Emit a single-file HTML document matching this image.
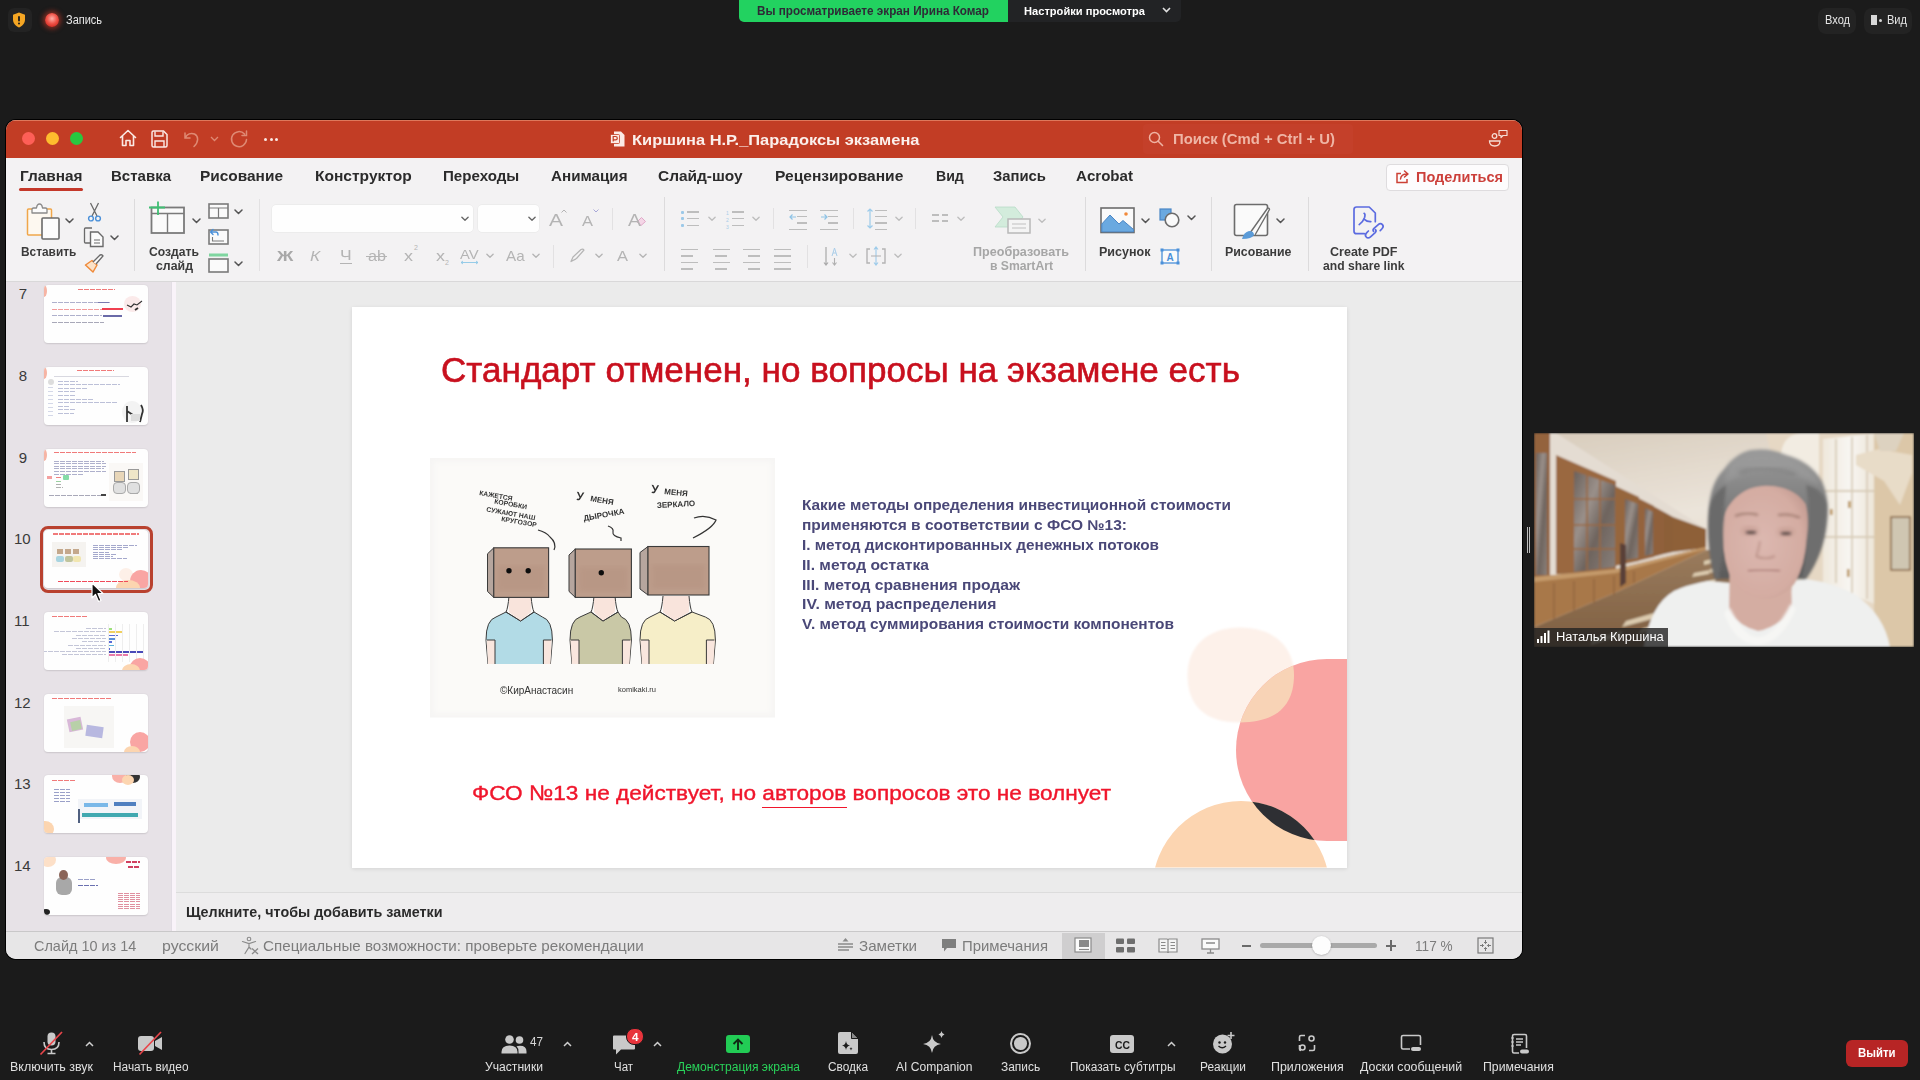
<!DOCTYPE html><html><head><meta charset="utf-8"><style>html,body{margin:0;padding:0;width:1920px;height:1080px;overflow:hidden;background:#1b1b1b;font-family:"Liberation Sans",sans-serif}span{white-space:pre;line-height:normal}</style></head><body><div style="position:relative;width:1920px;height:1080px;overflow:hidden"><div style="position:absolute;left:8px;top:8px;width:24px;height:24px;border-radius:6px;background:#232323"></div>
<svg style="position:absolute;left:12px;top:12px" width="14" height="16" viewBox="0 0 14 16"><path d="M7 0.5 L13 2.8 V7.5 C13 11.5 10 14.3 7 15.5 C4 14.3 1 11.5 1 7.5 V2.8 Z" fill="#f5a623"/><rect x="6.1" y="4" width="1.8" height="5.5" rx="0.9" fill="#1b1b1b"/><circle cx="7" cy="11.5" r="1" fill="#1b1b1b"/></svg>
<div style="position:absolute;left:45px;top:13px;width:14px;height:14px;border-radius:50%;background:radial-gradient(circle at 50% 40%,#ffb0a8 0%,#f0554a 45%,#d9362c 70%);box-shadow:0 0 5px 2px rgba(230,60,40,.55)"></div>
<div style="position:absolute;left:739px;top:0;width:442px;height:22px;border-radius:0 0 5px 5px;background:#222325"></div>
<div style="position:absolute;left:739px;top:0;width:269px;height:22px;border-radius:0 0 0 5px;background:#22d260"></div>
<svg style="position:absolute;left:1162px;top:7px" width="9" height="6" viewBox="0 0 9 6"><path d="M1 1 L4.5 4.5 L8 1" stroke="#e0e0e0" stroke-width="1.6" fill="none"/></svg>
<div style="position:absolute;left:1818px;top:8px;width:38px;height:26px;border-radius:8px;background:#232323"></div>
<div style="position:absolute;left:1864px;top:8px;width:48px;height:26px;border-radius:8px;background:#232323"></div>
<div style="position:absolute;left:1871px;top:15px;width:6px;height:10px;background:#d8d8d8"></div><div style="position:absolute;left:1879px;top:19px;width:3px;height:3px;border-radius:50%;background:#d8d8d8"></div>
<div style="position:absolute;left:6px;top:120px;width:1516px;height:839px;border-radius:10px;overflow:hidden;background:#ebebeb;box-shadow:0 0 0 1px #000"><div style="position:absolute;left:0;top:0;width:100%;height:38px;background:#c23d25;box-shadow:inset 0 1px 0 rgba(240,160,130,.6)"></div><div style="position:absolute;left:1137px;top:4px;width:210px;height:30px;background:#c4402a;border-radius:4px"></div><div style="position:absolute;left:0;top:38px;width:100%;height:123px;background:#f3f2f3;border-bottom:1px solid #d9d8d9"></div><div style="position:absolute;left:0;top:162px;width:166px;height:650px;background:#e7e2e7"></div><div style="position:absolute;left:166px;top:162px;width:4px;height:650px;background:#f9f3f9;box-shadow:-1px 0 0 #e2dde4"></div><div style="position:absolute;left:170px;top:772px;width:1346px;height:1px;background:#dcdcdc"></div><div style="position:absolute;left:170px;top:773px;width:1346px;height:39px;background:#eeedee"></div><div style="position:absolute;left:0;top:811px;width:100%;height:1px;background:#c9c8c9"></div><div style="position:absolute;left:0;top:812px;width:100%;height:27px;background:#e7e6e7"></div></div>
<div style="position:absolute;left:22.0px;top:132px;width:13px;height:13px;border-radius:50%;background:#fe5f57"></div>
<div style="position:absolute;left:46.0px;top:132px;width:13px;height:13px;border-radius:50%;background:#febc2e"></div>
<div style="position:absolute;left:69.5px;top:132px;width:13px;height:13px;border-radius:50%;background:#28c840"></div>
<svg style="position:absolute;left:118px;top:128px" width="20" height="20" viewBox="0 0 20 20"><path d="M2.5 9.5 L10 2.5 L17.5 9.5 M4.5 8 V17.5 H8 V12.5 H12 V17.5 H15.5 V8" stroke="#fbe9e4" stroke-width="1.6" fill="none" stroke-linejoin="round" stroke-linecap="round"/></svg>
<svg style="position:absolute;left:150px;top:130px" width="19" height="18" viewBox="0 0 19 18"><path d="M2 2.5 Q2 1 3.5 1 H13.5 L17 4.5 V15.5 Q17 17 15.5 17 H3.5 Q2 17 2 15.5 Z" stroke="#fbe9e4" stroke-width="1.5" fill="none"/><path d="M5 1.5 V6 H13 V1.5 M5 17 V11 H14 V17" stroke="#fbe9e4" stroke-width="1.4" fill="none"/></svg>
<svg style="position:absolute;left:182px;top:129px" width="20" height="20" viewBox="0 0 20 20"><path d="M3 4 V9 H8 M3.5 8.5 C5 5 9 3.5 12.5 5 C16.5 7 17 13 12 17.5" stroke="#df8a74" stroke-width="1.5" fill="none" stroke-linecap="round"/></svg>
<svg style="position:absolute;left:210px;top:136px" width="9" height="6" viewBox="0 0 9 6"><path d="M1 1 L4.5 4.5 L8 1" stroke="#df8a74" stroke-width="1.3" fill="none"/></svg>
<svg style="position:absolute;left:229px;top:129px" width="21" height="20" viewBox="0 0 21 20"><path d="M15.5 5 A7.5 7.5 0 1 0 17.5 10.5 M17.5 2 V6.5 H13" stroke="#df8a74" stroke-width="1.5" fill="none" stroke-linecap="round"/></svg>
<div style="position:absolute;left:264.0px;top:137.5px;width:3px;height:3px;border-radius:50%;background:#fbe9e4"></div>
<div style="position:absolute;left:269.5px;top:137.5px;width:3px;height:3px;border-radius:50%;background:#fbe9e4"></div>
<div style="position:absolute;left:275.0px;top:137.5px;width:3px;height:3px;border-radius:50%;background:#fbe9e4"></div>
<svg style="position:absolute;left:610px;top:131px" width="15" height="16" viewBox="0 0 15 16"><path d="M4 0.5 H11 L14.5 4 V15.5 H4 Z" fill="#fbeae5"/><rect x="0.5" y="3.5" width="9" height="9" rx="1" fill="#fbeae5" stroke="#c23d25" stroke-width="0.8"/><path d="M3.2 10.5 V5.5 H5.5 Q7.3 5.5 7.3 7.2 Q7.3 8.9 5.5 8.9 H3.2" stroke="#c23d25" stroke-width="1.2" fill="none"/></svg>
<svg style="position:absolute;left:1148px;top:131px" width="16" height="16" viewBox="0 0 16 16"><circle cx="6.5" cy="6.5" r="5" stroke="#efb3a3" stroke-width="1.5" fill="none"/><path d="M10.2 10.2 L14.5 14.5" stroke="#efb3a3" stroke-width="1.6" stroke-linecap="round"/></svg>
<svg style="position:absolute;left:1488px;top:128px" width="21" height="20" viewBox="0 0 21 20"><circle cx="6.5" cy="8" r="2.3" stroke="#f6ddd5" stroke-width="1.3" fill="none"/><path d="M1.5 13 H12 Q12 18 6.8 18 Q1.5 18 1.5 13 Z" stroke="#f6ddd5" stroke-width="1.3" fill="none"/><path d="M11 2.5 H19 V7.5 H15 L13 9.5 V7.5 H11 Z" stroke="#f6ddd5" stroke-width="1.2" fill="none" stroke-linejoin="round"/></svg>
<div style="position:absolute;left:19px;top:187.5px;width:63.5px;height:3.5px;border-radius:2px;background:#c4382a"></div>
<div style="position:absolute;left:1386px;top:163.5px;width:123px;height:27px;border-radius:4px;background:#fdfcfd;border:1px solid #dedcde;box-sizing:border-box"></div>
<svg style="position:absolute;left:1395px;top:169px" width="16" height="15" viewBox="0 0 16 15"><path d="M6 4.5 H2 V13.5 H12 V10" stroke="#cc4035" stroke-width="1.5" fill="none"/><path d="M5.5 10 Q6 5 12 5 M9.5 2 L13 5 L9.5 8" stroke="#cc4035" stroke-width="1.5" fill="none" stroke-linecap="round" stroke-linejoin="round"/></svg>
<svg style="position:absolute;left:26px;top:203px" width="35" height="38" viewBox="0 0 35 38"><path d="M2 6 H8 V32 H2 Z" fill="none"/><rect x="1.5" y="6" width="24" height="26" rx="1" fill="#fdf8f0" stroke="#f0a64a" stroke-width="1.5"/><path d="M6 10 V6.5 Q6 5 7.5 5 H10.5 Q11 1 13.5 1 Q16 1 16.5 5 H19.5 Q21 5 21 6.5 V10 Z" fill="#fbfbfb" stroke="#8a8a8a" stroke-width="1.3" stroke-linejoin="round"/><rect x="16" y="15" width="17" height="21" rx="1" fill="#fcfcfc" stroke="#6a6a6a" stroke-width="1.6"/></svg>
<svg style="position:absolute;left:64.5px;top:218px" width="9" height="6" viewBox="0 0 9 6"><path d="M1 1 L4.5 4.5 L8 1" stroke="#555" stroke-width="1.5" fill="none" stroke-linecap="round" stroke-linejoin="round"/></svg>
<svg style="position:absolute;left:87px;top:202px" width="15" height="20" viewBox="0 0 15 20"><path d="M3.5 1 L10 14 M11.5 1 L5 14" stroke="#6a6a6a" stroke-width="1.3"/><circle cx="4" cy="16.5" r="2.4" stroke="#4a90d9" stroke-width="1.4" fill="none"/><circle cx="11" cy="16.5" r="2.4" stroke="#4a90d9" stroke-width="1.4" fill="none"/></svg>
<svg style="position:absolute;left:83px;top:227px" width="22" height="21" viewBox="0 0 22 21"><path d="M9 1 H2.5 Q1.5 1 1.5 2 V15 Q1.5 16 2.5 16 H7" stroke="#6a6a6a" stroke-width="1.3" fill="none"/><path d="M7.5 5 H15 L20 10 V19.5 H7.5 Z" stroke="#6a6a6a" stroke-width="1.4" fill="#fbfbfb"/><path d="M11 13 H17 M11 16 H17" stroke="#6a6a6a" stroke-width="1.1"/></svg>
<svg style="position:absolute;left:109.5px;top:234.5px" width="9" height="6" viewBox="0 0 9 6"><path d="M1 1 L4.5 4.5 L8 1" stroke="#555" stroke-width="1.5" fill="none" stroke-linecap="round" stroke-linejoin="round"/></svg>
<svg style="position:absolute;left:84px;top:253px" width="21" height="20" viewBox="0 0 21 20"><path d="M1.5 12 L9 19 L13 12 L8 7.5 Z" fill="#fbe2c8" stroke="#ef8a3a" stroke-width="1.5" stroke-linejoin="round"/><path d="M9 9 L16 2 Q18 1 19 3 L12 11" fill="#fafafa" stroke="#6a6a6a" stroke-width="1.4"/></svg>
<div style="position:absolute;left:134px;top:199px;width:1px;height:72px;background:#dcdbdc"></div>
<svg style="position:absolute;left:148px;top:201px" width="38" height="34" viewBox="0 0 38 34"><rect x="3.5" y="6.5" width="32.5" height="25.5" fill="#fafafa" stroke="#7a7a7a" stroke-width="1.8"/><path d="M3.5 12.5 H36 M19.5 12.5 V32" stroke="#7a7a7a" stroke-width="1.4"/><path d="M10 0.5 V14 M1 6.5 H17" stroke="#3fbf73" stroke-width="1.8"/></svg>
<svg style="position:absolute;left:191.5px;top:218px" width="9" height="6" viewBox="0 0 9 6"><path d="M1 1 L4.5 4.5 L8 1" stroke="#555" stroke-width="1.5" fill="none" stroke-linecap="round" stroke-linejoin="round"/></svg>
<svg style="position:absolute;left:208px;top:203px" width="21" height="16" viewBox="0 0 21 16"><rect x="1" y="1" width="19" height="14" fill="#fafafa" stroke="#7a7a7a" stroke-width="1.6"/><path d="M1 5 H20 M10.5 5 V15" stroke="#7a7a7a" stroke-width="1.2"/></svg>
<svg style="position:absolute;left:234.0px;top:208.5px" width="9" height="6" viewBox="0 0 9 6"><path d="M1 1 L4.5 4.5 L8 1" stroke="#555" stroke-width="1.5" fill="none" stroke-linecap="round" stroke-linejoin="round"/></svg>
<svg style="position:absolute;left:208px;top:228px" width="21" height="17" viewBox="0 0 21 17"><rect x="1" y="2" width="19" height="14" fill="#fafafa" stroke="#7a7a7a" stroke-width="1.6"/><path d="M4.5 9 V13 H16" stroke="#7a7a7a" stroke-width="1.1" fill="none"/><path d="M2.5 4 L5 1.5 M2.5 4 L5 6.5 M2.5 4 H8 Q10 4 10 7" stroke="#4a90d9" stroke-width="1.4" fill="none" stroke-linecap="round"/></svg>
<svg style="position:absolute;left:208px;top:253px" width="21" height="20" viewBox="0 0 21 20"><rect x="1" y="0.5" width="19" height="3" fill="#7fd6a0"/><rect x="1" y="6" width="19" height="13" fill="#fafafa" stroke="#7a7a7a" stroke-width="1.6"/></svg>
<svg style="position:absolute;left:234.0px;top:260.5px" width="9" height="6" viewBox="0 0 9 6"><path d="M1 1 L4.5 4.5 L8 1" stroke="#555" stroke-width="1.5" fill="none" stroke-linecap="round" stroke-linejoin="round"/></svg>
<div style="position:absolute;left:258.5px;top:199px;width:1px;height:72px;background:#e2e1e2"></div>
<div style="position:absolute;left:271.5px;top:204.5px;width:201px;height:27px;border-radius:4px;background:#fefefe;box-shadow:0 0 0 0.5px #e6e6e6"></div>
<svg style="position:absolute;left:461.0px;top:215.5px" width="8" height="6" viewBox="0 0 9 6"><path d="M1 1 L4.5 4.5 L8 1" stroke="#666" stroke-width="1.5" fill="none" stroke-linecap="round" stroke-linejoin="round"/></svg>
<div style="position:absolute;left:477.5px;top:204.5px;width:61.5px;height:27px;border-radius:4px;background:#fefefe;box-shadow:0 0 0 0.5px #e6e6e6"></div>
<svg style="position:absolute;left:528.0px;top:215.5px" width="8" height="6" viewBox="0 0 9 6"><path d="M1 1 L4.5 4.5 L8 1" stroke="#666" stroke-width="1.5" fill="none" stroke-linecap="round" stroke-linejoin="round"/></svg>
<svg style="position:absolute;left:561px;top:209px" width="6" height="4"><path d="M0.5 3.5 L3 1 L5.5 3.5" stroke="#b4b4b4" stroke-width="1" fill="none"/></svg>
<svg style="position:absolute;left:593px;top:209px" width="6" height="4"><path d="M0.5 0.5 L3 3 L5.5 0.5" stroke="#a8a8d8" stroke-width="1" fill="none"/></svg>
<div style="position:absolute;left:612px;top:208px;width:1px;height:22px;background:#e2e1e2"></div>
<svg style="position:absolute;left:636px;top:216px" width="11" height="10" viewBox="0 0 11 10"><path d="M1 6 L5.5 1.5 L9.5 5.5 L5 9.5 Z" fill="#f4d6e6" stroke="#e0a8c8" stroke-width="1"/></svg>
<div style="position:absolute;left:339.5px;top:263px;width:12.5px;height:1px;background:#b4b4b4"></div>
<div style="position:absolute;left:366px;top:256px;width:21px;height:1px;background:#b4b4b4"></div>
<svg style="position:absolute;left:460px;top:260px" width="19" height="5" viewBox="0 0 19 5"><path d="M1 2.5 H18 M1 2.5 L3 1 M1 2.5 L3 4 M18 2.5 L16 1 M18 2.5 L16 4" stroke="#8cc7e6" stroke-width="0.9" fill="none"/></svg>
<svg style="position:absolute;left:486.0px;top:253px" width="8" height="6" viewBox="0 0 9 6"><path d="M1 1 L4.5 4.5 L8 1" stroke="#b4b4b4" stroke-width="1.5" fill="none" stroke-linecap="round" stroke-linejoin="round"/></svg>
<svg style="position:absolute;left:532.0px;top:253px" width="8" height="6" viewBox="0 0 9 6"><path d="M1 1 L4.5 4.5 L8 1" stroke="#b4b4b4" stroke-width="1.5" fill="none" stroke-linecap="round" stroke-linejoin="round"/></svg>
<div style="position:absolute;left:552.5px;top:245px;width:1px;height:23px;background:#e2e1e2"></div>
<svg style="position:absolute;left:569px;top:248px" width="17" height="15" viewBox="0 0 17 15"><path d="M2 13.5 L4 9 L12 1.5 Q14 0.5 15 2 L7.5 10.5 Z M2 13.5 L7 11" stroke="#b4b4b4" stroke-width="1.2" fill="none" stroke-linejoin="round"/></svg>
<svg style="position:absolute;left:594.5px;top:253px" width="8" height="6" viewBox="0 0 9 6"><path d="M1 1 L4.5 4.5 L8 1" stroke="#b4b4b4" stroke-width="1.5" fill="none" stroke-linecap="round" stroke-linejoin="round"/></svg>
<svg style="position:absolute;left:639.0px;top:253px" width="8" height="6" viewBox="0 0 9 6"><path d="M1 1 L4.5 4.5 L8 1" stroke="#b4b4b4" stroke-width="1.5" fill="none" stroke-linecap="round" stroke-linejoin="round"/></svg>
<div style="position:absolute;left:663.5px;top:197px;width:1px;height:74px;background:#dcdbdc"></div>
<div style="position:absolute;left:681px;top:210.5px;width:3px;height:3px;background:#9cc9e8;border-radius:1px"></div>
<div style="position:absolute;left:681px;top:217.3px;width:3px;height:3px;background:#9cc9e8;border-radius:1px"></div>
<div style="position:absolute;left:681px;top:224.1px;width:3px;height:3px;background:#9cc9e8;border-radius:1px"></div>
<div style="position:absolute;left:686.5px;top:211.0px;width:12px;height:1.6px;background:#bdbdbd"></div><div style="position:absolute;left:686.5px;top:217.8px;width:12px;height:1.6px;background:#bdbdbd"></div><div style="position:absolute;left:686.5px;top:224.6px;width:12px;height:1.6px;background:#bdbdbd"></div>
<svg style="position:absolute;left:707.5px;top:216px" width="8" height="6" viewBox="0 0 9 6"><path d="M1 1 L4.5 4.5 L8 1" stroke="#bdbdbd" stroke-width="1.5" fill="none" stroke-linecap="round" stroke-linejoin="round"/></svg>
<div style="position:absolute;left:731.5px;top:211.0px;width:12.5px;height:1.6px;background:#bdbdbd"></div><div style="position:absolute;left:731.5px;top:217.8px;width:12.5px;height:1.6px;background:#bdbdbd"></div><div style="position:absolute;left:731.5px;top:224.6px;width:12.5px;height:1.6px;background:#bdbdbd"></div>
<svg style="position:absolute;left:752.0px;top:216px" width="8" height="6" viewBox="0 0 9 6"><path d="M1 1 L4.5 4.5 L8 1" stroke="#bdbdbd" stroke-width="1.5" fill="none" stroke-linecap="round" stroke-linejoin="round"/></svg>
<div style="position:absolute;left:773px;top:208px;width:1px;height:21px;background:#e2e1e2"></div>
<div style="position:absolute;left:789px;top:209.5px;width:17.5px;height:1.6px;background:#bdbdbd"></div><div style="position:absolute;left:797px;top:215.9px;width:9.5px;height:1.6px;background:#bdbdbd"></div><div style="position:absolute;left:797px;top:222.3px;width:9.5px;height:1.6px;background:#bdbdbd"></div><div style="position:absolute;left:789px;top:228.7px;width:17.5px;height:1.6px;background:#bdbdbd"></div>
<svg style="position:absolute;left:789px;top:213px" width="8" height="8" viewBox="0 0 8 8"><path d="M7 4 H1 M3.5 1.5 L1 4 L3.5 6.5" stroke="#8fc3e6" stroke-width="1.2" fill="none"/></svg>
<div style="position:absolute;left:820px;top:209.5px;width:17.5px;height:1.6px;background:#bdbdbd"></div><div style="position:absolute;left:828px;top:215.9px;width:9.5px;height:1.6px;background:#bdbdbd"></div><div style="position:absolute;left:828px;top:222.3px;width:9.5px;height:1.6px;background:#bdbdbd"></div><div style="position:absolute;left:820px;top:228.7px;width:17.5px;height:1.6px;background:#bdbdbd"></div>
<svg style="position:absolute;left:820px;top:213px" width="8" height="8" viewBox="0 0 8 8"><path d="M1 4 H7 M4.5 1.5 L7 4 L4.5 6.5" stroke="#8fc3e6" stroke-width="1.2" fill="none"/></svg>
<div style="position:absolute;left:852.5px;top:208px;width:1px;height:21px;background:#e2e1e2"></div>
<svg style="position:absolute;left:866px;top:208px" width="8" height="21" viewBox="0 0 8 21"><path d="M4 1 V20 M1.5 3.5 L4 1 L6.5 3.5 M1.5 17.5 L4 20 L6.5 17.5" stroke="#9dcbea" stroke-width="1.2" fill="none"/></svg>
<div style="position:absolute;left:875px;top:209.5px;width:12px;height:1.6px;background:#bdbdbd"></div><div style="position:absolute;left:875px;top:215.9px;width:12px;height:1.6px;background:#bdbdbd"></div><div style="position:absolute;left:875px;top:222.3px;width:12px;height:1.6px;background:#bdbdbd"></div><div style="position:absolute;left:875px;top:228.7px;width:12px;height:1.6px;background:#bdbdbd"></div>
<svg style="position:absolute;left:894.5px;top:216px" width="8" height="6" viewBox="0 0 9 6"><path d="M1 1 L4.5 4.5 L8 1" stroke="#bdbdbd" stroke-width="1.5" fill="none" stroke-linecap="round" stroke-linejoin="round"/></svg>
<div style="position:absolute;left:915px;top:208px;width:1px;height:21px;background:#e2e1e2"></div>
<div style="position:absolute;left:932px;top:214px;width:6.5px;height:1.6px;background:#bdbdbd"></div><div style="position:absolute;left:932px;top:220px;width:6.5px;height:1.6px;background:#bdbdbd"></div>
<div style="position:absolute;left:941.5px;top:214px;width:6.5px;height:1.6px;background:#bdbdbd"></div><div style="position:absolute;left:941.5px;top:220px;width:6.5px;height:1.6px;background:#bdbdbd"></div>
<svg style="position:absolute;left:957.0px;top:216px" width="8" height="6" viewBox="0 0 9 6"><path d="M1 1 L4.5 4.5 L8 1" stroke="#bdbdbd" stroke-width="1.5" fill="none" stroke-linecap="round" stroke-linejoin="round"/></svg>
<div style="position:absolute;left:681px;top:248.5px;width:17px;height:1.6px;background:#bdbdbd"></div><div style="position:absolute;left:681px;top:255.0px;width:12px;height:1.6px;background:#bdbdbd"></div><div style="position:absolute;left:681px;top:261.5px;width:17px;height:1.6px;background:#bdbdbd"></div><div style="position:absolute;left:681px;top:268.0px;width:12px;height:1.6px;background:#bdbdbd"></div>
<div style="position:absolute;left:712.5px;top:248.5px;width:17px;height:1.6px;background:#bdbdbd"></div><div style="position:absolute;left:715.0px;top:255.0px;width:12px;height:1.6px;background:#bdbdbd"></div><div style="position:absolute;left:712.5px;top:261.5px;width:17px;height:1.6px;background:#bdbdbd"></div><div style="position:absolute;left:715.0px;top:268.0px;width:12px;height:1.6px;background:#bdbdbd"></div>
<div style="position:absolute;left:743px;top:248.5px;width:17px;height:1.6px;background:#bdbdbd"></div><div style="position:absolute;left:748px;top:255.0px;width:12px;height:1.6px;background:#bdbdbd"></div><div style="position:absolute;left:743px;top:261.5px;width:17px;height:1.6px;background:#bdbdbd"></div><div style="position:absolute;left:748px;top:268.0px;width:12px;height:1.6px;background:#bdbdbd"></div>
<div style="position:absolute;left:774px;top:248.5px;width:17px;height:1.6px;background:#bdbdbd"></div><div style="position:absolute;left:774px;top:255.0px;width:17px;height:1.6px;background:#bdbdbd"></div><div style="position:absolute;left:774px;top:261.5px;width:17px;height:1.6px;background:#bdbdbd"></div><div style="position:absolute;left:774px;top:268.0px;width:17px;height:1.6px;background:#bdbdbd"></div>
<div style="position:absolute;left:806.5px;top:245px;width:1px;height:23px;background:#e2e1e2"></div>
<svg style="position:absolute;left:823px;top:246px" width="18" height="21" viewBox="0 0 18 21"><path d="M3 1 V19 M1 16.5 L3 19 L5 16.5" stroke="#a9a9a9" stroke-width="1.2" fill="none"/><path d="M9 10 L11.5 2 L14 10 M10 7 H13" stroke="#a9cde8" stroke-width="1" fill="none"/><path d="M11.5 12 V19 M9.5 16.5 L11.5 19 L13.5 16.5" stroke="#b0b0b0" stroke-width="1.1" fill="none"/></svg>
<svg style="position:absolute;left:848.5px;top:253px" width="8" height="6" viewBox="0 0 9 6"><path d="M1 1 L4.5 4.5 L8 1" stroke="#bdbdbd" stroke-width="1.5" fill="none" stroke-linecap="round" stroke-linejoin="round"/></svg>
<svg style="position:absolute;left:865px;top:245px" width="22" height="22" viewBox="0 0 22 22"><path d="M5 4 H2 V18 H5 M17 4 H20 V18 H17" stroke="#b4b4b4" stroke-width="1.4" fill="none"/><path d="M11 2 V20 M9 4.5 L11 2 L13 4.5 M9 17.5 L11 20 L13 17.5" stroke="#9dcbea" stroke-width="1.1" fill="none"/><path d="M6 11 H16" stroke="#b4b4b4" stroke-width="1.1"/></svg>
<svg style="position:absolute;left:893.5px;top:253px" width="8" height="6" viewBox="0 0 9 6"><path d="M1 1 L4.5 4.5 L8 1" stroke="#bdbdbd" stroke-width="1.5" fill="none" stroke-linecap="round" stroke-linejoin="round"/></svg>
<svg style="position:absolute;left:994px;top:206px" width="38" height="29" viewBox="0 0 38 29"><path d="M1 1 H21 L29 11 L21 21 H1 L9 11 Z" fill="#d3ecdc" stroke="#b8dcc6" stroke-width="0.8"/><rect x="14" y="13" width="22" height="14" fill="#f4f4f4" stroke="#b8b8b8" stroke-width="1.5"/><path d="M18 18 H32 M18 22 H32" stroke="#c0c0c0" stroke-width="1"/></svg>
<svg style="position:absolute;left:1038.0px;top:218px" width="8" height="6" viewBox="0 0 9 6"><path d="M1 1 L4.5 4.5 L8 1" stroke="#bdbdbd" stroke-width="1.5" fill="none" stroke-linecap="round" stroke-linejoin="round"/></svg>
<div style="position:absolute;left:1084.5px;top:197px;width:1px;height:74px;background:#dcdbdc"></div>
<svg style="position:absolute;left:1100px;top:207px" width="35" height="27" viewBox="0 0 35 27"><rect x="1" y="1" width="33" height="24.5" fill="#fafafa" stroke="#6c6c6c" stroke-width="1.6"/><path d="M1.8 24.8 V17 L10 8 L19 17 L23 13.5 L33.5 22.5 V24.8 Z" fill="#6aa9e0" stroke="#4a86c5" stroke-width="1"/><circle cx="26" cy="7" r="1.8" fill="#f28a3a"/></svg>
<svg style="position:absolute;left:1141.0px;top:218px" width="9" height="6" viewBox="0 0 9 6"><path d="M1 1 L4.5 4.5 L8 1" stroke="#555" stroke-width="1.5" fill="none" stroke-linecap="round" stroke-linejoin="round"/></svg>
<svg style="position:absolute;left:1159px;top:208px" width="22" height="20" viewBox="0 0 22 20"><rect x="1" y="1" width="11" height="11" fill="#6aa9e0" stroke="#4a86c5" stroke-width="1.2"/><circle cx="13" cy="12" r="6.8" fill="#fafafa" stroke="#6c6c6c" stroke-width="1.6"/></svg>
<svg style="position:absolute;left:1186.5px;top:215px" width="9" height="6" viewBox="0 0 9 6"><path d="M1 1 L4.5 4.5 L8 1" stroke="#555" stroke-width="1.5" fill="none" stroke-linecap="round" stroke-linejoin="round"/></svg>
<svg style="position:absolute;left:1160px;top:248px" width="20" height="17" viewBox="0 0 20 17"><rect x="2" y="2" width="16" height="13" fill="#fafafa" stroke="#4a90d9" stroke-width="1.3"/><rect x="0.5" y="0.5" width="3" height="3" fill="#4a90d9"/><rect x="16.5" y="0.5" width="3" height="3" fill="#4a90d9"/><rect x="0.5" y="13.5" width="3" height="3" fill="#4a90d9"/><rect x="16.5" y="13.5" width="3" height="3" fill="#4a90d9"/><text x="10" y="13" font-family="Liberation Sans" font-size="10" font-weight="700" fill="#4a90d9" text-anchor="middle">A</text></svg>
<div style="position:absolute;left:1211px;top:197px;width:1px;height:74px;background:#dcdbdc"></div>
<svg style="position:absolute;left:1233px;top:203px" width="40" height="38" viewBox="0 0 40 38"><rect x="1.5" y="1.5" width="33" height="31" rx="2" fill="#fafafa" stroke="#6c6c6c" stroke-width="1.6"/><path d="M17 30 L34 6 Q36 4 36.5 6.5 L22 32" fill="#fafafa" stroke="#6c6c6c" stroke-width="1.4"/><path d="M9 36 Q11 29 16 28 Q21 28 21 32 Q19 36 9 36 Z" fill="#5b9bd8"/></svg>
<svg style="position:absolute;left:1275.5px;top:218px" width="9" height="6" viewBox="0 0 9 6"><path d="M1 1 L4.5 4.5 L8 1" stroke="#555" stroke-width="1.5" fill="none" stroke-linecap="round" stroke-linejoin="round"/></svg>
<div style="position:absolute;left:1307.5px;top:197px;width:1px;height:74px;background:#dcdbdc"></div>
<svg style="position:absolute;left:1352px;top:205px" width="34" height="36" viewBox="0 0 34 36"><g stroke="#5b6be0" stroke-width="1.7" fill="none" stroke-linecap="round" stroke-linejoin="round"><path d="M12.3 28.7 H4.5 Q2 28.7 2 26.2 V4.5 Q2 2 4.5 2 H17.2 L23.3 8 V16.7"/><path d="M12.1 8.3 Q13.6 9 12.6 12.5 Q11 17 7.2 19.6"/><path d="M12.4 14.3 Q15 16.8 18.8 16.6"/><path d="M21.6 26.4 Q20.4 25 22 23.4 L26 19.8 Q28.5 17.6 30.4 19.6 Q32.2 21.6 29.8 24 L28.2 25.6"/><path d="M23.4 24.6 Q24.8 26 23.2 27.6 L18.5 31.8 Q16 34 14.2 32 Q12.3 30 14.8 27.6 L16.4 26"/></g></svg>
<div style="position:absolute;left:44px;top:285px;width:104px;height:58px;border-radius:4px;background:#fefefe;box-shadow:0 0.5px 1.5px rgba(0,0,0,.12);overflow:hidden"><div style="position:absolute;left:-3px;top:0px;width:6px;height:12px;background:#f6b4a4;border-radius:50px;border-radius:50%"></div><div style="position:absolute;left:34px;top:3.5px;width:37px;height:1.4px;background:repeating-linear-gradient(90deg,#f07a7a 0 5px,transparent 5px 6px)"></div><div style="position:absolute;left:8px;top:17px;width:58px;height:1.3px;background:repeating-linear-gradient(90deg,#aeb0cc 0 5px,transparent 5px 6px)"></div><div style="position:absolute;left:54px;top:17px;width:11px;height:1.3px;background:#7a7ab0;border-radius:0px;"></div><div style="position:absolute;left:8px;top:23.5px;width:50px;height:1.3px;background:repeating-linear-gradient(90deg,#f39a9a 0 5px,transparent 5px 6px)"></div><div style="position:absolute;left:58px;top:23px;width:21px;height:1.8px;background:#f04050;border-radius:0px;"></div><div style="position:absolute;left:8px;top:30px;width:50px;height:1.3px;background:repeating-linear-gradient(90deg,#aeb0cc 0 5px,transparent 5px 6px)"></div><div style="position:absolute;left:59px;top:30px;width:19px;height:1.6px;background:#6a6aa8;border-radius:0px;"></div><div style="position:absolute;left:8px;top:37px;width:52px;height:1.3px;background:repeating-linear-gradient(90deg,#a8a8b8 0 5px,transparent 5px 6px)"></div><div style="position:absolute;left:80px;top:11px;width:17px;height:16px;background:#fbeaea;border-radius:50px;border-radius:50%"></div><svg style="position:absolute;left:82px;top:13px" width="17" height="15"><path d="M1 7 L5 9 L8 6 L11 7 L16 3" stroke="#333" stroke-width="1.1" fill="none"/><path d="M9 12 L12 10" stroke="#333" stroke-width="1.8"/></svg></div>
<div style="position:absolute;left:44px;top:366.5px;width:104px;height:58px;border-radius:4px;background:#fefefe;box-shadow:0 0.5px 1.5px rgba(0,0,0,.12);overflow:hidden"><div style="position:absolute;left:-3px;top:0px;width:6px;height:12px;background:#f6b4a4;border-radius:50px;border-radius:50%"></div><div style="position:absolute;left:33px;top:3.5px;width:37px;height:1.4px;background:repeating-linear-gradient(90deg,#f07a7a 0 5px,transparent 5px 6px)"></div><div style="position:absolute;left:10px;top:9px;width:75px;height:0.8px;background:#d8d8e0;border-radius:0px;"></div><div style="position:absolute;left:4px;top:12px;width:6px;height:6px;background:#ddd;border-radius:50px;border-radius:50%"></div><div style="position:absolute;left:4px;top:20px;width:6px;height:1px;background:repeating-linear-gradient(90deg,#d4d8e8 0 5px,transparent 5px 6px)"></div><div style="position:absolute;left:4px;top:24px;width:6px;height:1px;background:repeating-linear-gradient(90deg,#d4d8e8 0 5px,transparent 5px 6px)"></div><div style="position:absolute;left:4px;top:28px;width:6px;height:1px;background:repeating-linear-gradient(90deg,#d4d8e8 0 5px,transparent 5px 6px)"></div><div style="position:absolute;left:4px;top:32px;width:6px;height:1px;background:repeating-linear-gradient(90deg,#d4d8e8 0 5px,transparent 5px 6px)"></div><div style="position:absolute;left:4px;top:36px;width:6px;height:1px;background:repeating-linear-gradient(90deg,#d4d8e8 0 5px,transparent 5px 6px)"></div><div style="position:absolute;left:4px;top:40px;width:6px;height:1px;background:repeating-linear-gradient(90deg,#d4d8e8 0 5px,transparent 5px 6px)"></div><div style="position:absolute;left:4px;top:44px;width:6px;height:1px;background:repeating-linear-gradient(90deg,#d4d8e8 0 5px,transparent 5px 6px)"></div><div style="position:absolute;left:4px;top:48px;width:6px;height:1px;background:repeating-linear-gradient(90deg,#d4d8e8 0 5px,transparent 5px 6px)"></div><div style="position:absolute;left:14px;top:14.0px;width:20px;height:1px;background:repeating-linear-gradient(90deg,#bcc0d8 0 5px,transparent 5px 6px)"></div><div style="position:absolute;left:14px;top:17.6px;width:62px;height:1px;background:repeating-linear-gradient(90deg,#bcc0d8 0 5px,transparent 5px 6px)"></div><div style="position:absolute;left:14px;top:21.2px;width:30px;height:1px;background:repeating-linear-gradient(90deg,#bcc0d8 0 5px,transparent 5px 6px)"></div><div style="position:absolute;left:14px;top:24.8px;width:18px;height:1px;background:repeating-linear-gradient(90deg,#bcc0d8 0 5px,transparent 5px 6px)"></div><div style="position:absolute;left:14px;top:28.4px;width:18px;height:1px;background:repeating-linear-gradient(90deg,#bcc0d8 0 5px,transparent 5px 6px)"></div><div style="position:absolute;left:14px;top:32.0px;width:36px;height:1px;background:repeating-linear-gradient(90deg,#bcc0d8 0 5px,transparent 5px 6px)"></div><div style="position:absolute;left:14px;top:35.6px;width:60px;height:1px;background:repeating-linear-gradient(90deg,#bcc0d8 0 5px,transparent 5px 6px)"></div><div style="position:absolute;left:14px;top:39.2px;width:12px;height:1px;background:repeating-linear-gradient(90deg,#bcc0d8 0 5px,transparent 5px 6px)"></div><div style="position:absolute;left:14px;top:42.8px;width:18px;height:1px;background:repeating-linear-gradient(90deg,#bcc0d8 0 5px,transparent 5px 6px)"></div><div style="position:absolute;left:14px;top:46.4px;width:16px;height:1px;background:repeating-linear-gradient(90deg,#bcc0d8 0 5px,transparent 5px 6px)"></div><div style="position:absolute;left:78px;top:34px;width:20px;height:22px;background:#f3f3f3;border-radius:50px;border-radius:50%"></div><svg style="position:absolute;left:80px;top:35px" width="22" height="22"><path d="M3 4 V20 M3 9 L9 13 M17 3 Q20 8 18 12 L16 20" stroke="#333" stroke-width="1.8" fill="none"/><rect x="7" y="12" width="9" height="7" fill="#ddd"/></svg></div>
<div style="position:absolute;left:44px;top:448.5px;width:104px;height:58px;border-radius:4px;background:#fefefe;box-shadow:0 0.5px 1.5px rgba(0,0,0,.12);overflow:hidden"><div style="position:absolute;left:-3px;top:0px;width:6px;height:12px;background:#f6b4a4;border-radius:50px;border-radius:50%"></div><div style="position:absolute;left:10px;top:3.5px;width:82px;height:1.4px;background:repeating-linear-gradient(90deg,#f07a7a 0 5px,transparent 5px 6px)"></div><div style="position:absolute;left:10px;top:12.0px;width:50px;height:1px;background:repeating-linear-gradient(90deg,#aeb0cc 0 5px,transparent 5px 6px)"></div><div style="position:absolute;left:10px;top:14.6px;width:52px;height:1px;background:repeating-linear-gradient(90deg,#aeb0cc 0 5px,transparent 5px 6px)"></div><div style="position:absolute;left:10px;top:17.2px;width:52px;height:1px;background:repeating-linear-gradient(90deg,#aeb0cc 0 5px,transparent 5px 6px)"></div><div style="position:absolute;left:10px;top:19.8px;width:50px;height:1px;background:repeating-linear-gradient(90deg,#aeb0cc 0 5px,transparent 5px 6px)"></div><div style="position:absolute;left:10px;top:22.4px;width:52px;height:1px;background:repeating-linear-gradient(90deg,#aeb0cc 0 5px,transparent 5px 6px)"></div><div style="position:absolute;left:10px;top:25.0px;width:30px;height:1px;background:repeating-linear-gradient(90deg,#aeb0cc 0 5px,transparent 5px 6px)"></div><div style="position:absolute;left:3px;top:27px;width:5px;height:3px;background:#f4a0a0;border-radius:0px;"></div><div style="position:absolute;left:12px;top:28px;width:6px;height:1.2px;background:repeating-linear-gradient(90deg,#f08080 0 5px,transparent 5px 6px)"></div><div style="position:absolute;left:19px;top:26px;width:6px;height:5px;background:#86dca8;border-radius:1px;"></div><div style="position:absolute;left:12px;top:32px;width:6px;height:1px;background:repeating-linear-gradient(90deg,#9ad0a0 0 5px,transparent 5px 6px)"></div><div style="position:absolute;left:12px;top:35px;width:6px;height:1px;background:repeating-linear-gradient(90deg,#b0b0b0 0 5px,transparent 5px 6px)"></div><div style="position:absolute;left:12px;top:38px;width:7px;height:1px;background:repeating-linear-gradient(90deg,#b0b0b0 0 5px,transparent 5px 6px)"></div><div style="position:absolute;left:5px;top:46px;width:54px;height:1px;background:repeating-linear-gradient(90deg,#a8a8b8 0 5px,transparent 5px 6px)"></div><div style="position:absolute;left:57px;top:45px;width:5px;height:2px;background:#444;border-radius:0px;"></div><div style="position:absolute;left:65px;top:14px;width:34px;height:38px;background:#faf8f6;border-radius:0px;"></div><div style="position:absolute;left:70px;top:22px;width:9px;height:9px;background:#e8d6b8;border-radius:0px;border:0.5px solid #999"></div><div style="position:absolute;left:84px;top:20px;width:9px;height:9px;background:#efe6c8;border-radius:0px;border:0.5px solid #999"></div><div style="position:absolute;left:69px;top:33px;width:11px;height:10px;background:#e0e0e0;border-radius:4px;border:0.5px solid #aaa"></div><div style="position:absolute;left:83px;top:33px;width:11px;height:10px;background:#e0e0e0;border-radius:4px;border:0.5px solid #aaa"></div><div style="position:absolute;left:86px;top:44px;width:8px;height:1px;background:repeating-linear-gradient(90deg,#aaa 0 5px,transparent 5px 6px)"></div></div>
<div style="position:absolute;left:44px;top:530px;width:104px;height:58px;border-radius:4px;background:#fefefe;box-shadow:0 0.5px 1.5px rgba(0,0,0,.12);overflow:hidden"><div style="position:absolute;left:9px;top:3px;width:86px;height:1.5px;background:repeating-linear-gradient(90deg,#f07a7a 0 5px,transparent 5px 6px)"></div><div style="position:absolute;left:8px;top:12px;width:34px;height:25px;background:#f5f3f0;border-radius:0px;"></div><div style="position:absolute;left:13px;top:19px;width:6px;height:5px;background:#c4a88c;border-radius:0px;"></div><div style="position:absolute;left:21px;top:19px;width:6px;height:5px;background:#c4a88c;border-radius:0px;"></div><div style="position:absolute;left:29px;top:19px;width:6px;height:5px;background:#c4a88c;border-radius:0px;"></div><div style="position:absolute;left:12px;top:26px;width:8px;height:6px;background:#a8d4e0;border-radius:2px;"></div><div style="position:absolute;left:20.5px;top:26px;width:8px;height:6px;background:#c0c49c;border-radius:2px;"></div><div style="position:absolute;left:29px;top:26px;width:8px;height:6px;background:#f1e6b0;border-radius:2px;"></div><div style="position:absolute;left:49px;top:15.0px;width:44px;height:1px;background:repeating-linear-gradient(90deg,#a4a8cc 0 5px,transparent 5px 6px)"></div><div style="position:absolute;left:49px;top:17.2px;width:36px;height:1px;background:repeating-linear-gradient(90deg,#a4a8cc 0 5px,transparent 5px 6px)"></div><div style="position:absolute;left:49px;top:19.4px;width:30px;height:1px;background:repeating-linear-gradient(90deg,#a4a8cc 0 5px,transparent 5px 6px)"></div><div style="position:absolute;left:49px;top:21.6px;width:16px;height:1px;background:repeating-linear-gradient(90deg,#a4a8cc 0 5px,transparent 5px 6px)"></div><div style="position:absolute;left:49px;top:23.8px;width:24px;height:1px;background:repeating-linear-gradient(90deg,#a4a8cc 0 5px,transparent 5px 6px)"></div><div style="position:absolute;left:49px;top:26.0px;width:20px;height:1px;background:repeating-linear-gradient(90deg,#a4a8cc 0 5px,transparent 5px 6px)"></div><div style="position:absolute;left:49px;top:28.200000000000003px;width:34px;height:1px;background:repeating-linear-gradient(90deg,#a4a8cc 0 5px,transparent 5px 6px)"></div><div style="position:absolute;left:75px;top:38px;width:14px;height:13px;background:#fdf0e8;border-radius:50px;border-radius:50%"></div><div style="position:absolute;left:86px;top:40px;width:22px;height:23px;background:#f9a5a3;border-radius:50px;border-radius:50%"></div><div style="position:absolute;left:72px;top:50px;width:24px;height:16px;background:#fcd5b0;border-radius:50px;border-radius:50%"></div><div style="position:absolute;left:14px;top:51px;width:70px;height:1.4px;background:repeating-linear-gradient(90deg,#f04a5a 0 5px,transparent 5px 6px)"></div></div>
<div style="position:absolute;left:44px;top:612px;width:104px;height:58px;border-radius:4px;background:#fefefe;box-shadow:0 0.5px 1.5px rgba(0,0,0,.12);overflow:hidden"><div style="position:absolute;left:8px;top:4px;width:36px;height:1.4px;background:repeating-linear-gradient(90deg,#f07a7a 0 5px,transparent 5px 6px)"></div><div style="position:absolute;left:42px;top:16.0px;width:20px;height:1px;background:repeating-linear-gradient(90deg,#c4c6d8 0 5px,transparent 5px 6px)"></div><div style="position:absolute;left:10px;top:19.3px;width:52px;height:1px;background:repeating-linear-gradient(90deg,#c4c6d8 0 5px,transparent 5px 6px)"></div><div style="position:absolute;left:32px;top:22.6px;width:30px;height:1px;background:repeating-linear-gradient(90deg,#c4c6d8 0 5px,transparent 5px 6px)"></div><div style="position:absolute;left:28px;top:25.9px;width:34px;height:1px;background:repeating-linear-gradient(90deg,#c4c6d8 0 5px,transparent 5px 6px)"></div><div style="position:absolute;left:38px;top:29.2px;width:24px;height:1px;background:repeating-linear-gradient(90deg,#c4c6d8 0 5px,transparent 5px 6px)"></div><div style="position:absolute;left:24px;top:32.5px;width:38px;height:1px;background:repeating-linear-gradient(90deg,#c4c6d8 0 5px,transparent 5px 6px)"></div><div style="position:absolute;left:32px;top:35.8px;width:30px;height:1px;background:repeating-linear-gradient(90deg,#c4c6d8 0 5px,transparent 5px 6px)"></div><div style="position:absolute;left:-8px;top:39.099999999999994px;width:70px;height:1px;background:repeating-linear-gradient(90deg,#c4c6d8 0 5px,transparent 5px 6px)"></div><div style="position:absolute;left:18px;top:42.4px;width:44px;height:1px;background:repeating-linear-gradient(90deg,#c4c6d8 0 5px,transparent 5px 6px)"></div><div style="position:absolute;left:64px;top:16.0px;width:4px;height:1.8px;background:#9de07a;border-radius:0px;"></div><div style="position:absolute;left:64px;top:19.3px;width:14px;height:1.8px;background:#f0d060;border-radius:0px;"></div><div style="position:absolute;left:64px;top:22.6px;width:10px;height:1.8px;background:#5a6cd8;border-radius:0px;"></div><div style="position:absolute;left:64px;top:25.9px;width:8px;height:1.8px;background:#5a90d8;border-radius:0px;"></div><div style="position:absolute;left:64px;top:29.2px;width:4px;height:1.8px;background:#5a6cd8;border-radius:0px;"></div><div style="position:absolute;left:64px;top:32.5px;width:6px;height:1.8px;background:#5ab0d8;border-radius:0px;"></div><div style="position:absolute;left:64px;top:35.8px;width:2px;height:1.8px;background:#5a6cd8;border-radius:0px;"></div><div style="position:absolute;left:64px;top:39.099999999999994px;width:36px;height:1.8px;background:#4a4ab8;border-radius:0px;"></div><div style="position:absolute;left:64px;top:42.4px;width:20px;height:1.8px;background:#e87aa8;border-radius:0px;"></div><div style="position:absolute;left:64px;top:12px;width:0.6px;height:38px;background:#eee;border-radius:0px;"></div><div style="position:absolute;left:71px;top:12px;width:0.6px;height:38px;background:#eee;border-radius:0px;"></div><div style="position:absolute;left:78px;top:12px;width:0.6px;height:38px;background:#eee;border-radius:0px;"></div><div style="position:absolute;left:85px;top:12px;width:0.6px;height:38px;background:#eee;border-radius:0px;"></div><div style="position:absolute;left:92px;top:12px;width:0.6px;height:38px;background:#eee;border-radius:0px;"></div><div style="position:absolute;left:99px;top:12px;width:0.6px;height:38px;background:#eee;border-radius:0px;"></div><div style="position:absolute;left:86px;top:46px;width:20px;height:18px;background:#f9a5a3;border-radius:50px;border-radius:50%"></div><div style="position:absolute;left:78px;top:52px;width:18px;height:14px;background:#fcd5b0;border-radius:50px;border-radius:50%"></div></div>
<div style="position:absolute;left:44px;top:693.5px;width:104px;height:58px;border-radius:4px;background:#fefefe;box-shadow:0 0.5px 1.5px rgba(0,0,0,.12);overflow:hidden"><div style="position:absolute;left:8px;top:4px;width:60px;height:1.4px;background:repeating-linear-gradient(90deg,#f07a7a 0 5px,transparent 5px 6px)"></div><div style="position:absolute;left:20px;top:12px;width:50px;height:42px;background:#f7f6f4;border-radius:0px;"></div><div style="position:absolute;left:24px;top:24px;width:14px;height:13px;background:#d8b8d8;border-radius:0px;transform:rotate(-12deg)"></div><div style="position:absolute;left:27px;top:27px;width:10px;height:9px;background:#b8d0a8;border-radius:0px;transform:rotate(-12deg)"></div><div style="position:absolute;left:42px;top:32px;width:17px;height:11px;background:#b8b8e0;border-radius:0px;transform:rotate(8deg)"></div><div style="position:absolute;left:86px;top:38px;width:20px;height:20px;background:#f9a5a3;border-radius:50px;border-radius:50%"></div><div style="position:absolute;left:80px;top:52px;width:16px;height:12px;background:#fcd5b0;border-radius:50px;border-radius:50%"></div></div>
<div style="position:absolute;left:44px;top:775px;width:104px;height:58px;border-radius:4px;background:#fefefe;box-shadow:0 0.5px 1.5px rgba(0,0,0,.12);overflow:hidden"><div style="position:absolute;left:8px;top:5px;width:24px;height:1.4px;background:repeating-linear-gradient(90deg,#f07a7a 0 5px,transparent 5px 6px)"></div><div style="position:absolute;left:10px;top:14px;width:16px;height:1px;background:repeating-linear-gradient(90deg,#9aa0c8 0 5px,transparent 5px 6px)"></div><div style="position:absolute;left:10px;top:17px;width:16px;height:1px;background:repeating-linear-gradient(90deg,#9aa0c8 0 5px,transparent 5px 6px)"></div><div style="position:absolute;left:10px;top:20px;width:16px;height:1px;background:repeating-linear-gradient(90deg,#9aa0c8 0 5px,transparent 5px 6px)"></div><div style="position:absolute;left:10px;top:23px;width:16px;height:1px;background:repeating-linear-gradient(90deg,#9aa0c8 0 5px,transparent 5px 6px)"></div><div style="position:absolute;left:10px;top:26px;width:16px;height:1px;background:repeating-linear-gradient(90deg,#9aa0c8 0 5px,transparent 5px 6px)"></div><div style="position:absolute;left:68px;top:-6px;width:16px;height:14px;background:#f9b0a8;border-radius:50px;border-radius:50%"></div><div style="position:absolute;left:82px;top:-4px;width:14px;height:12px;background:#333;border-radius:50px;border-radius:50%"></div><div style="position:absolute;left:78px;top:0px;width:12px;height:10px;background:#fcd5b0;border-radius:50px;border-radius:50%"></div><div style="position:absolute;left:-8px;top:46px;width:18px;height:16px;background:#fcd5b0;border-radius:50px;border-radius:50%"></div><div style="position:absolute;left:34px;top:24px;width:64px;height:20px;background:#f2f4f8;border-radius:0px;"></div><div style="position:absolute;left:40px;top:28px;width:24px;height:4px;background:#7ab8e8;border-radius:0px;"></div><div style="position:absolute;left:70px;top:27px;width:22px;height:4px;background:#5080c0;border-radius:0px;"></div><div style="position:absolute;left:38px;top:38px;width:56px;height:4px;background:#40a8b0;border-radius:0px;"></div><div style="position:absolute;left:34px;top:34px;width:2px;height:14px;background:#506080;border-radius:0px;"></div></div>
<div style="position:absolute;left:44px;top:856.5px;width:104px;height:58px;border-radius:4px;background:#fefefe;box-shadow:0 0.5px 1.5px rgba(0,0,0,.12);overflow:hidden"><div style="position:absolute;left:-4px;top:-4px;width:16px;height:14px;background:#fde0c8;border-radius:50px;border-radius:50%"></div><div style="position:absolute;left:62px;top:-5px;width:20px;height:12px;background:#f9b0a8;border-radius:50px;border-radius:50%"></div><div style="position:absolute;left:12px;top:20px;width:16px;height:18px;background:#a8a8a8;border-radius:6px;"></div><div style="position:absolute;left:15px;top:13px;width:9px;height:10px;background:#8a6458;border-radius:50px;border-radius:50%"></div><div style="position:absolute;left:34px;top:22px;width:18px;height:1.4px;background:repeating-linear-gradient(90deg,#9aa0c8 0 5px,transparent 5px 6px)"></div><div style="position:absolute;left:34px;top:28px;width:20px;height:1.4px;background:repeating-linear-gradient(90deg,#6a70b0 0 5px,transparent 5px 6px)"></div><div style="position:absolute;left:82px;top:4px;width:14px;height:2px;background:repeating-linear-gradient(90deg,#d04060 0 5px,transparent 5px 6px)"></div><div style="position:absolute;left:84px;top:9px;width:12px;height:2px;background:repeating-linear-gradient(90deg,#d04060 0 5px,transparent 5px 6px)"></div><div style="position:absolute;left:74px;top:36.0px;width:22px;height:1.2px;background:repeating-linear-gradient(90deg,#e090a0 0 5px,transparent 5px 6px)"></div><div style="position:absolute;left:74px;top:38.2px;width:22px;height:1.2px;background:repeating-linear-gradient(90deg,#e090a0 0 5px,transparent 5px 6px)"></div><div style="position:absolute;left:74px;top:40.4px;width:22px;height:1.2px;background:repeating-linear-gradient(90deg,#e090a0 0 5px,transparent 5px 6px)"></div><div style="position:absolute;left:74px;top:42.6px;width:22px;height:1.2px;background:repeating-linear-gradient(90deg,#e090a0 0 5px,transparent 5px 6px)"></div><div style="position:absolute;left:74px;top:44.8px;width:22px;height:1.2px;background:repeating-linear-gradient(90deg,#e090a0 0 5px,transparent 5px 6px)"></div><div style="position:absolute;left:74px;top:47.0px;width:22px;height:1.2px;background:repeating-linear-gradient(90deg,#e090a0 0 5px,transparent 5px 6px)"></div><div style="position:absolute;left:74px;top:49.2px;width:22px;height:1.2px;background:repeating-linear-gradient(90deg,#e090a0 0 5px,transparent 5px 6px)"></div><div style="position:absolute;left:74px;top:51.400000000000006px;width:22px;height:1.2px;background:repeating-linear-gradient(90deg,#e090a0 0 5px,transparent 5px 6px)"></div><div style="position:absolute;left:-2px;top:52px;width:8px;height:6px;background:#222;border-radius:50px;border-radius:50%"></div></div>
<div style="position:absolute;left:39.5px;top:525.5px;width:113px;height:67px;border-radius:8px;border:3.6px solid #b9412f;box-sizing:border-box"></div>
<svg style="position:absolute;left:91px;top:582px" width="14" height="21" viewBox="0 0 14 21"><path d="M1 1 V16 L4.5 12.5 L7.5 19.5 L10 18.5 L7 11.5 H12 Z" fill="#111" stroke="#fff" stroke-width="1.2" stroke-linejoin="round"/></svg>
<div style="position:absolute;left:352px;top:307px;width:995px;height:560.5px;background:#ffffff;box-shadow:0 1px 4px rgba(0,0,0,.10)"></div>
<svg style="position:absolute;left:352px;top:307px" width="995" height="561" viewBox="0 0 995 561"><defs><clipPath id="cp"><rect x="0" y="0" width="995" height="560.5"/></clipPath><clipPath id="pinkc"><path d="M995 352 H975 A91 91 0 0 0 975 534 H995 Z"/></clipPath><filter id="bl" x="-20%" y="-20%" width="140%" height="140%"><feGaussianBlur stdDeviation="1.2"/></filter></defs><g clip-path="url(#cp)"><path d="M888 320.5 C922 320.5 942 340 942 368 C942 398 925 415.5 888 415.5 C852 415.5 835.5 398 835.5 368 C835.5 340 855 320.5 888 320.5 Z" fill="#fdf1ea" filter="url(#bl)"/><path d="M995 352 H975 A91 91 0 0 0 975 534 H995 Z" fill="#f9a4a2"/><g clip-path="url(#pinkc)"><path d="M888 320.5 C922 320.5 942 340 942 368 C942 398 925 415.5 888 415.5 C852 415.5 835.5 398 835.5 368 C835.5 340 855 320.5 888 320.5 Z" fill="#f8d3b6"/></g><circle cx="889" cy="582.7" r="88.7" fill="#fcd5b1"/><g clip-path="url(#pinkc)"><circle cx="889" cy="582.7" r="88.7" fill="#2e2f33"/></g></g></svg>
<svg style="position:absolute;left:430px;top:457.5px" width="345" height="260" viewBox="0 0 345 260"><defs><filter id="soft" x="-5%" y="-5%" width="110%" height="110%"><feGaussianBlur stdDeviation="2.5"/></filter><filter id="sb"><feGaussianBlur stdDeviation="0.35"/></filter></defs><rect x="0" y="0" width="345" height="259.5" fill="#f6f5f4"/><rect x="4" y="4" width="337" height="251.5" fill="#fbfaf8" filter="url(#soft)"/><g filter="url(#sb)"><path d="M58 206 L56 182 Q56 162 66 159 L76 154 L90.6 163 L104 154 L112.4 159 Q122.4 162 122.4 182 L120.4 206 Z" fill="#b2dbe6"/><path d="M58 206 L56 182 Q56 162 66 159 L76 154 L90.6 163 L104 154 L112.4 159 Q122.4 162 122.4 182 L120.4 206" fill="none" stroke="#3a3a3a" stroke-width="1" stroke-linejoin="round"/><path d="M56.5 182 H65 V206 H58 Z" fill="#f9e6de"/><path d="M121.9 182 H113.4 V206 H120.4 Z" fill="#f9e6de"/><path d="M57 182 H65 V206 M121.4 182 H113.4 V206" stroke="#3a3a3a" stroke-width="1" fill="none"/><path d="M79 138 V154 L90.6 163 L101 154 V138 Z" fill="#f9e4dc"/><path d="M79 138 Q78 150 76 154 L90.6 163 L104 154 Q102 150 101 138" fill="none" stroke="#3a3a3a" stroke-width="1"/><path d="M57.5 95.8 L63.8 89.8 V139.4 L57.5 133.4 Z" fill="#b6a69e" stroke="#3a3a3a" stroke-width="1"/><rect x="63.8" y="89.8" width="54.8" height="49.60000000000001" fill="#bd9d8b" stroke="#3a3a3a" stroke-width="1.1"/><rect x="67.8" y="107.8" width="46.8" height="24.800000000000004" fill="#b08c7a" opacity="0.35" filter="url(#soft)"/><circle cx="79" cy="112.7" r="2.7" fill="#111"/><circle cx="98.2" cy="112.7" r="2.7" fill="#111"/><path d="M142 206 L140 182 Q140 162 150 159 L161 154 L173 163 L188 154 L191.4 159 Q201.4 162 201.4 182 L199.4 206 Z" fill="#c9c8a6"/><path d="M142 206 L140 182 Q140 162 150 159 L161 154 L173 163 L188 154 L191.4 159 Q201.4 162 201.4 182 L199.4 206" fill="none" stroke="#3a3a3a" stroke-width="1" stroke-linejoin="round"/><path d="M140.5 182 H149 V206 H142 Z" fill="#f9e6de"/><path d="M200.9 182 H192.4 V206 H199.4 Z" fill="#f9e6de"/><path d="M141 182 H149 V206 M200.4 182 H192.4 V206" stroke="#3a3a3a" stroke-width="1" fill="none"/><path d="M164 138 V154 L173 163 L185 154 V138 Z" fill="#f9e4dc"/><path d="M164 138 Q163 150 161 154 L173 163 L188 154 Q186 150 185 138" fill="none" stroke="#3a3a3a" stroke-width="1"/><path d="M139.0 97 L145.3 91 V139.4 L139.0 133.4 Z" fill="#b6a69e" stroke="#3a3a3a" stroke-width="1"/><rect x="145.3" y="91" width="56.099999999999994" height="48.400000000000006" fill="#bd9d8b" stroke="#3a3a3a" stroke-width="1.1"/><rect x="149.3" y="109" width="48.099999999999994" height="24.200000000000003" fill="#b08c7a" opacity="0.35" filter="url(#soft)"/><circle cx="171.3" cy="114.7" r="2.7" fill="#111"/><path d="M212 206 L210 182 Q210 162 220 159 L230 154 L244.6 163 L262 154 L275.4 159 Q285.4 162 285.4 182 L283.4 206 Z" fill="#f6eec8"/><path d="M212 206 L210 182 Q210 162 220 159 L230 154 L244.6 163 L262 154 L275.4 159 Q285.4 162 285.4 182 L283.4 206" fill="none" stroke="#3a3a3a" stroke-width="1" stroke-linejoin="round"/><path d="M210.5 182 H219 V206 H212 Z" fill="#f9e6de"/><path d="M284.9 182 H276.4 V206 H283.4 Z" fill="#f9e6de"/><path d="M211 182 H219 V206 M284.4 182 H276.4 V206" stroke="#3a3a3a" stroke-width="1" fill="none"/><path d="M233 138 V154 L244.6 163 L259 154 V138 Z" fill="#f9e4dc"/><path d="M233 138 Q232 150 230 154 L244.6 163 L262 154 Q260 150 259 138" fill="none" stroke="#3a3a3a" stroke-width="1"/><path d="M210 94.5 L218 88.5 V137 L210 131 Z" fill="#b6a69e" stroke="#3a3a3a" stroke-width="1"/><rect x="218" y="88.5" width="61" height="48.5" fill="#bd9d8b" stroke="#3a3a3a" stroke-width="1.1"/><rect x="222" y="106.5" width="53" height="24.25" fill="#b08c7a" opacity="0.35" filter="url(#soft)"/><path d="M108 72 Q116 74 120 79 Q127 85 124 92" stroke="#333" stroke-width="1.2" fill="none"/><path d="M178 68 Q184 70 183 74 Q182 78 191 80 L191 83" stroke="#333" stroke-width="1.2" fill="none"/><path d="M264 60 Q275 56 286 62 Q283 70 263 80" stroke="#333" stroke-width="1.3" fill="none"/><g font-family="Liberation Sans" font-size="8" fill="#333" font-weight="700"><text x="49" y="37" font-size="6.8" transform="rotate(10 49 37)">КАЖЕТСЯ</text><text x="64" y="45.5" font-size="6.8" transform="rotate(10 64 45.5)">КОРОБКИ</text><text x="56" y="53.5" font-size="6.8" transform="rotate(10 56 53.5)">СУЖАЮТ НАШ</text><text x="71" y="63" font-size="6.8" transform="rotate(10 71 63)">КРУГОЗОР</text><text x="146" y="42" font-size="12" transform="rotate(6 146 42)">У</text><text x="160" y="43" transform="rotate(10 160 43)">МЕНЯ</text><text x="154" y="63" transform="rotate(-10 154 63)">ДЫРОЧКА</text><text x="221" y="35" font-size="12" transform="rotate(4 221 35)">У</text><text x="234" y="36" transform="rotate(6 234 36)">МЕНЯ</text><text x="227" y="50" transform="rotate(-3 227 50)">ЗЕРКАЛО</text><text x="70" y="236" font-size="10" font-weight="400">©КирАнастасин</text><text x="188" y="234" font-size="7.5" font-weight="400">komikaki.ru</text></g></g></svg>
<div style="position:absolute;left:762px;top:806.5px;width:84.5px;height:1.6px;background:#f0162c"></div>
<svg style="position:absolute;left:241px;top:936px" width="19" height="19" viewBox="0 0 19 19"><circle cx="8" cy="3" r="1.8" stroke="#8a8a8a" stroke-width="1.1" fill="none"/><path d="M1.5 5.5 L8 7.5 L14.5 5.5 M8 7.5 V11 L4 17.5 M8 11 L10 13" stroke="#8a8a8a" stroke-width="1.2" fill="none" stroke-linecap="round"/><path d="M11 12.5 L17 18 M17 12.5 L11 18" stroke="#8a8a8a" stroke-width="1.3"/></svg>
<svg style="position:absolute;left:837px;top:937px" width="17" height="16" viewBox="0 0 17 16"><path d="M8.5 1 L5.5 4.5 H11.5 Z" fill="#8a8a8a"/><path d="M1 7 H16 M1 10 H16 M1 13 H12" stroke="#8a8a8a" stroke-width="1.3"/></svg>
<svg style="position:absolute;left:941px;top:938px" width="16" height="15" viewBox="0 0 16 15"><path d="M1 1 H15 V10 H6 L3 13.5 V10 H1 Z" fill="#7e7e7e"/></svg>
<div style="position:absolute;left:1061.5px;top:932.5px;width:43.5px;height:26px;background:#cfcecf"></div>
<svg style="position:absolute;left:1074px;top:937px" width="18" height="16" viewBox="0 0 18 16"><rect x="1" y="1" width="16" height="14" fill="#fbfbfb" stroke="#8a8a8a" stroke-width="1.2"/><rect x="5" y="3" width="10" height="7" fill="#8a8a8a"/><path d="M5 12.5 H15" stroke="#8a8a8a" stroke-width="1.2"/></svg>
<svg style="position:absolute;left:1116px;top:938px" width="19" height="15" viewBox="0 0 19 15"><rect x="0" y="0.5" width="8" height="5.5" rx="1" fill="#6e6e6e"/><rect x="11" y="0.5" width="8" height="5.5" rx="1" fill="#6e6e6e"/><rect x="0" y="9" width="8" height="5.5" rx="1" fill="#6e6e6e"/><rect x="11" y="9" width="8" height="5.5" rx="1" fill="#6e6e6e"/></svg>
<svg style="position:absolute;left:1158px;top:937px" width="20" height="17" viewBox="0 0 20 17"><path d="M1 2 H9 Q10 2 10 3 V16 Q10 15 9 15 H1 Z M19 2 H11 Q10 2 10 3 V16 Q10 15 11 15 H19 Z" fill="#f4f4f4" stroke="#8a8a8a" stroke-width="1.2"/><path d="M3 5.5 H7.5 M3 8.5 H7.5 M3 11.5 H7.5 M12.5 5.5 H17 M12.5 8.5 H17 M12.5 11.5 H17" stroke="#8a8a8a" stroke-width="1"/></svg>
<svg style="position:absolute;left:1201px;top:938px" width="19" height="16" viewBox="0 0 19 16"><rect x="1" y="1" width="17" height="10" fill="#fafafa" stroke="#8a8a8a" stroke-width="1.3"/><path d="M9.5 11 V15 M6 15 H13 M5 5 H14" stroke="#8a8a8a" stroke-width="1.3"/></svg>
<div style="position:absolute;left:1241.5px;top:944.5px;width:9.5px;height:2px;background:#6a6a6a"></div>
<div style="position:absolute;left:1259.5px;top:943px;width:117px;height:5px;border-radius:3px;background:#a9a9a9"></div>
<div style="position:absolute;left:1311.5px;top:936px;width:19px;height:19px;border-radius:50%;background:#fdfdfd;box-shadow:0 0.5px 2px rgba(0,0,0,.25)"></div>
<div style="position:absolute;left:1385.5px;top:944.5px;width:10.5px;height:2px;background:#6a6a6a"></div><div style="position:absolute;left:1389.75px;top:940.25px;width:2px;height:10.5px;background:#6a6a6a"></div>
<svg style="position:absolute;left:1477px;top:937px" width="17" height="17" viewBox="0 0 17 17"><rect x="1" y="1" width="15" height="15" fill="none" stroke="#7a7a7a" stroke-width="1.2"/><path d="M8.5 3 V6.5 M8.5 10.5 V14 M3 8.5 H6.5 M10.5 8.5 H14 M7 5 L8.5 6.5 L10 5 M7 12 L8.5 10.5 L10 12 M5 7 L6.5 8.5 L5 10 M12 7 L10.5 8.5 L12 10" stroke="#7a7a7a" stroke-width="1" fill="none"/></svg>
<div style="position:absolute;left:1526.5px;top:527px;width:1px;height:26px;background:#bdbdbd"></div><div style="position:absolute;left:1529px;top:527px;width:1px;height:26px;background:#bdbdbd"></div>
<svg style="position:absolute;left:1534px;top:433px" width="380" height="214" viewBox="0 0 380 214"><defs><linearGradient id="ceil" x1="0" y1="0" x2="0.3" y2="1"><stop offset="0" stop-color="#d8ccbc"/><stop offset="0.45" stop-color="#ebe4da"/><stop offset="1" stop-color="#e4d8c8"/></linearGradient><linearGradient id="floor" x1="0" y1="0" x2="0" y2="1"><stop offset="0" stop-color="#9a7c5e"/><stop offset="1" stop-color="#7e5e40"/></linearGradient><linearGradient id="win" x1="0" y1="0" x2="1" y2="0"><stop offset="0" stop-color="#efe8dc"/><stop offset="0.5" stop-color="#f8f6f2"/><stop offset="1" stop-color="#ece4d6"/></linearGradient><linearGradient id="hairg" x1="0" y1="0" x2="0" y2="1"><stop offset="0" stop-color="#9a9a9a"/><stop offset="0.4" stop-color="#808080"/><stop offset="1" stop-color="#5a5a5a"/></linearGradient><radialGradient id="faceg" cx="0.45" cy="0.5" r="0.6"><stop offset="0" stop-color="#dcb8b0"/><stop offset="0.8" stop-color="#d4aca2"/><stop offset="1" stop-color="#c69e94"/></radialGradient><linearGradient id="glass" x1="0" y1="0" x2="1" y2="1"><stop offset="0" stop-color="#6a605a"/><stop offset="0.35" stop-color="#9a908a"/><stop offset="0.6" stop-color="#6e645e"/><stop offset="1" stop-color="#8a807a"/></linearGradient><filter id="vb" x="-5%" y="-5%" width="110%" height="110%"><feGaussianBlur stdDeviation="0.9"/></filter><filter id="vb2" x="-10%" y="-10%" width="120%" height="120%"><feGaussianBlur stdDeviation="2"/></filter></defs><g filter="url(#vb)"><rect width="380" height="214" fill="url(#ceil)"/><path d="M0 214 L0 194 L85 158 L172 117 L176 117 L380 214 Z" fill="url(#floor)"/><g fill="#eadcc0" opacity="0.85"><path d="M150 165 L170 160 L168 166 L146 171 Z"/><path d="M165 150 L182 146 L180 151 L162 155 Z"/><path d="M160 140 L176 137 L175 141 L158 144 Z"/><path d="M92 188 L120 180 L118 186 L88 194 Z"/><path d="M125 172 L148 166 L146 172 L122 178 Z"/><path d="M170 128 L178 126 L178 130 L170 132 Z"/><path d="M176 136 L186 134 L186 138 L176 140 Z"/><path d="M140 158 L156 154 L155 158 L138 162 Z"/><path d="M108 196 L132 188 L130 193 L104 201 Z"/><path d="M60 206 L88 198 L86 203 L56 212 Z"/></g><path d="M0 0 H22 L172 96 V117 L0 194 Z" fill="#e4dcd2"/><path d="M0 0 H16 V146 L0 150 Z" fill="#94643c"/><path d="M2 20 H13 V142 H2 Z" fill="url(#glass)"/><path d="M22 22 L82 48 V140 L22 141 Z" fill="#9a6840"/><path d="M40 38 L81 52 V134 L40 139 Z" fill="url(#glass)"/><g stroke="#9a6840" stroke-width="1.6"><path d="M53 42 V137 M66 47 V136 M40 66 H81 M40 92 H81 M40 116 H81"/></g><path d="M81 53 L105 64 V128 L81 133 Z" fill="#96663e"/><path d="M91 66 L104 71 V125 L91 127 Z" fill="url(#glass)"/><path d="M104 65 L120 73 V124 L104 128 Z" fill="#94643c"/><path d="M111 75 L119 79 V121 L111 123 Z" fill="url(#glass)"/><path d="M119 73 L130 79 V121 L119 124 Z" fill="#90603a"/><path d="M130 79 L139 84 V119 L130 121 Z" fill="#8c5e38"/><path d="M139 84 L172 96 V115 L139 119 Z" fill="#8e6038"/><path d="M0 144 L82 136 L172 114 V117 L85 158 L0 194 Z" fill="#a8784a"/><path d="M0 144 L82 136 L172 114 L172 116 L82 140 L0 149 Z" fill="#c49a6a"/><g stroke="#8c5c34" stroke-width="1"><path d="M20 150 V186 M40 148 V178 M60 146 V170 M80 143 V162 M100 138 V150"/></g><path d="M86 110 L92 112 V150 L86 154 Z" fill="#5a4038"/><path d="M232 0 H380 V214 H283 Z" fill="#e6d8c4"/><path d="M247 20 Q250 0 270 0 H285 V60 H250 Z" fill="#f2ece2"/><path d="M289 6 L343 0 V172 L289 150 Z" fill="url(#win)"/><g stroke="#d8ccb8" stroke-width="1.8" fill="none"><path d="M302 6 V150 M318 4 V160 M333 2 V166 M289 58 H343 M289 104 H343"/></g><g fill="#b89050"><rect x="314" y="68" width="2.5" height="7"/><rect x="296" y="76" width="2.5" height="6"/><rect x="313" y="136" width="2.5" height="8"/></g><path d="M340 0 H380 V214 H340 Z" fill="#dcc7a8"/><path d="M322 22 L345 16 L378 22 V40 L366 72 L350 48 L322 32 Z" fill="#e8dcc8"/><path d="M340 0 H370 L362 18 L346 18 Z" fill="#ddd2c0"/><rect x="357" y="84" width="19" height="53" fill="#cfc6b2" stroke="#8a6a48" stroke-width="1.6"/><path d="M181 146 Q172 110 175 76 Q176 50 190 36 Q204 18 219 16.7 Q238 15 252 22 Q276 28 288 48 Q296 66 293 90 Q290 120 271.5 146 Z" fill="url(#hairg)" filter="url(#vb)"/><path d="M196 30 Q218 16 250 24 Q276 32 286 52 Q262 40 236 38 Q212 38 190 50 Z" fill="#9c9c9c" opacity="0.7" filter="url(#vb2)"/><path d="M205 40 Q232 30 262 42" stroke="#666" stroke-width="3" fill="none" opacity="0.5" filter="url(#vb2)"/><path d="M110 214 Q116 172 140 158 Q152 152 174 148 L196 150 Q206 178 224 188 Q246 180 262 148 L272 146 Q300 150 322 162 Q350 182 356 214 Z" fill="#eff0ef"/><path d="M195.6 140 L257 140 L258 178 Q240 196 224 198 Q206 194 195 178 Z" fill="#d4ada2"/><path d="M195.6 174.5 Q210 204 223.4 204 Q240 204 257 170.5 L262 176 Q246 212 223 212 Q200 210 190 180 Z" fill="#f6f6f4" filter="url(#vb)"/><path d="M189 102 Q188 84 194 74 Q208 53 232 52.8 Q260 53 271.5 71 Q276 86 273 104 Q271 132 261 150 Q248 166 230 166 Q210 165 199 149 Q189 130 189 102 Z" fill="url(#faceg)"/><path d="M175 76 Q178 60 192 52 Q190 74 189 96 Q188 126 185 146 L181 146 Q172 110 175 76 Z" fill="#6a6a6a" filter="url(#vb)"/><path d="M293 72 Q290 56 272 52 Q276 76 274 100 Q272 126 268 146 L271.5 146 Q292 118 293 72 Z" fill="#6e6e6e" filter="url(#vb)"/><ellipse cx="216" cy="98" rx="9" ry="5" fill="#c49c92" opacity="0.7" filter="url(#vb2)"/><ellipse cx="252" cy="99" rx="9" ry="5" fill="#c49c92" opacity="0.7" filter="url(#vb2)"/><path d="M201 83 Q213 78 224 82 M244 82 Q256 80 266 85" stroke="#9e7a6e" stroke-width="2" fill="none" filter="url(#vb)"/><ellipse cx="217" cy="99.5" rx="5.5" ry="2.2" fill="#6e5a56" filter="url(#vb)"/><ellipse cx="252" cy="100.5" rx="5.5" ry="2.2" fill="#6e5a56" filter="url(#vb)"/><path d="M226 108 Q224 120 222 123 Q231 128 241 123" stroke="#b48a80" stroke-width="1.5" fill="none" filter="url(#vb)"/><path d="M214 138 Q229 135 246 138" stroke="#a87a74" stroke-width="1.8" fill="none" filter="url(#vb)"/></g><rect x="0" y="195" width="134" height="19" fill="#222" fill-opacity="0.8"/><rect x="3" y="206" width="2" height="4" fill="#fff"/><rect x="6.5" y="203" width="2" height="7" fill="#fff"/><rect x="10" y="200" width="2" height="10" fill="#fff"/><rect x="13.5" y="197.5" width="2" height="12.5" fill="#fff"/></svg>
<svg style="position:absolute;left:39px;top:1031px" width="25" height="25" viewBox="0 0 25 25"><rect x="8.5" y="1.5" width="8" height="13" rx="4" fill="#c9c9c9"/><path d="M5 11 Q5 18.5 12.5 18.5 Q20 18.5 20 11 M12.5 18.5 V22.5 M8.5 22.5 H16.5" stroke="#c9c9c9" stroke-width="1.6" fill="none"/><path d="M23 1 L1.5 23.5" stroke="#e8454a" stroke-width="1.7"/></svg>
<svg style="position:absolute;left:84.5px;top:1040.5px" width="9" height="6" viewBox="0 0 9 6"><path d="M1 5 L4.5 1.5 L8 5" stroke="#cfcfcf" stroke-width="1.5" fill="none"/></svg>
<svg style="position:absolute;left:137px;top:1031px" width="26" height="25" viewBox="0 0 26 25"><rect x="1" y="5" width="16" height="15" rx="3" fill="#c9c9c9"/><path d="M18 10 L25 6 V19 L18 15 Z" fill="#c9c9c9"/><path d="M24 1 L2.5 23.5" stroke="#e8454a" stroke-width="1.7"/></svg>
<svg style="position:absolute;left:501px;top:1034px" width="26" height="20" viewBox="0 0 26 20"><circle cx="8.5" cy="5.5" r="4.3" fill="#c9c9c9"/><path d="M0.5 18 Q0.5 11.5 8.5 11.5 Q16.5 11.5 16.5 18 V19.5 H0.5 Z" fill="#c9c9c9"/><circle cx="18.5" cy="6" r="3.8" fill="#c9c9c9"/><path d="M17.5 19.5 V18 Q17.5 14 15.5 12.3 Q17 11.7 19 11.7 Q25.5 11.7 25.5 17.5 V19.5 Z" fill="#c9c9c9"/></svg>
<svg style="position:absolute;left:562.5px;top:1041px" width="9" height="6" viewBox="0 0 9 6"><path d="M1 5 L4.5 1.5 L8 5" stroke="#cfcfcf" stroke-width="1.5" fill="none"/></svg>
<svg style="position:absolute;left:612px;top:1034px" width="24" height="22" viewBox="0 0 24 22"><path d="M2 1.5 H22 Q23 1.5 23 2.5 V14.5 Q23 15.5 22 15.5 H9 L4 20.5 V15.5 H2 Q1 15.5 1 14.5 V2.5 Q1 1.5 2 1.5 Z" fill="#c9c9c9"/></svg>
<div style="position:absolute;left:627px;top:1029px;width:16px;height:15px;border-radius:8px;background:#e8343c;border:1.2px solid #1b1b1b;box-sizing:content-box;margin:-1.2px"></div>
<svg style="position:absolute;left:652.5px;top:1041px" width="9" height="6" viewBox="0 0 9 6"><path d="M1 5 L4.5 1.5 L8 5" stroke="#cfcfcf" stroke-width="1.5" fill="none"/></svg>
<div style="position:absolute;left:725.5px;top:1035px;width:24.5px;height:18px;border-radius:3px;background:#22cc55"></div>
<svg style="position:absolute;left:732px;top:1037.5px" width="12" height="13" viewBox="0 0 12 13"><path d="M6 12 V2 M1.5 6 L6 1.5 L10.5 6" stroke="#0f2a14" stroke-width="1.9" fill="none"/></svg>
<svg style="position:absolute;left:837px;top:1031px" width="22" height="24" viewBox="0 0 22 24"><path d="M3 1 H14 L21 8 V21 Q21 23 19 23 H3 Q1 23 1 21 V3 Q1 1 3 1 Z" fill="#c9c9c9"/><path d="M14 1 V8 H21" fill="#8a8a8a"/><path d="M14.5 0.5 V7.5 H21.5" stroke="#1b1b1b" stroke-width="1" fill="none"/><path d="M9 10 Q9.5 14 13 14.5 Q9.5 15 9 19 Q8.5 15 5 14.5 Q8.5 14 9 10 Z" fill="#1b1b1b"/><path d="M14 16 Q14.2 17.5 15.5 17.8 Q14.2 18 14 19.5 Q13.8 18 12.5 17.8 Q13.8 17.5 14 16 Z" fill="#1b1b1b"/></svg>
<svg style="position:absolute;left:921px;top:1030px" width="26" height="26" viewBox="0 0 26 26"><path d="M11 5 Q12 13 20 14 Q12 15 11 23 Q10 15 2 14 Q10 13 11 5 Z" fill="#c9c9c9"/><path d="M20.5 1 Q21 4 23.5 4.5 Q21 5 20.5 8 Q20 5 17.5 4.5 Q20 4 20.5 1 Z" fill="#c9c9c9"/></svg>
<div style="position:absolute;left:1010px;top:1033px;width:17px;height:17px;border-radius:50%;border:2.2px solid #c9c9c9;background:#1b1b1b"></div><div style="position:absolute;left:1014.4px;top:1037.4px;width:12.6px;height:12.6px;border-radius:50%;background:#c9c9c9"></div>
<div style="position:absolute;left:1110px;top:1035px;width:24px;height:18px;border-radius:3px;background:#c9c9c9"></div>
<svg style="position:absolute;left:1166.5px;top:1041px" width="9" height="6" viewBox="0 0 9 6"><path d="M1 5 L4.5 1.5 L8 5" stroke="#cfcfcf" stroke-width="1.5" fill="none"/></svg>
<svg style="position:absolute;left:1212px;top:1031px" width="24" height="24" viewBox="0 0 24 24"><circle cx="10.5" cy="13" r="9.5" fill="#c9c9c9"/><circle cx="7.5" cy="11.5" r="1.2" fill="#1b1b1b"/><circle cx="13" cy="11.5" r="1.2" fill="#1b1b1b"/><path d="M6.5 15 Q10.2 18.5 14 15" stroke="#1b1b1b" stroke-width="1.4" fill="none"/><path d="M19 1 V8 M15.5 4.5 H22.5" stroke="#c9c9c9" stroke-width="1.6"/></svg>
<svg style="position:absolute;left:1298px;top:1034px" width="18" height="18" viewBox="0 0 18 18"><path d="M7 1.5 H3 Q1.5 1.5 1.5 3 V7 M1.5 11 V15 Q1.5 16.5 3 16.5 M11 16.5 H15 Q16.5 16.5 16.5 15 V11" stroke="#c9c9c9" stroke-width="1.6" fill="none"/><circle cx="13.5" cy="4.5" r="2.5" stroke="#c9c9c9" stroke-width="1.6" fill="none"/><circle cx="4.5" cy="13.5" r="2.5" stroke="#c9c9c9" stroke-width="1.6" fill="none"/></svg>
<svg style="position:absolute;left:1400px;top:1034px" width="22" height="19" viewBox="0 0 22 19"><path d="M10 15 H3 Q1.5 15 1.5 13.5 V3 Q1.5 1.5 3 1.5 H19 Q20.5 1.5 20.5 3 V11" stroke="#c9c9c9" stroke-width="1.6" fill="none"/><rect x="11" y="13" width="10" height="4" rx="2" fill="#c9c9c9"/></svg>
<svg style="position:absolute;left:1510px;top:1033px" width="20" height="22" viewBox="0 0 20 22"><path d="M4 1.5 H15 Q16.5 1.5 16.5 3 V15 M4 1.5 Q2.5 1.5 2.5 3 V18.5 Q2.5 20 4 20 H9" stroke="#c9c9c9" stroke-width="1.6" fill="none"/><path d="M6 6 H13 M6 9 H13 M6 12 H11" stroke="#c9c9c9" stroke-width="1.4"/><path d="M1 5 H4 M1 9 H4 M1 13 H4" stroke="#c9c9c9" stroke-width="1.2"/><rect x="10" y="16.5" width="9" height="4" rx="2" fill="#c9c9c9"/></svg>
<div style="position:absolute;left:1846px;top:1040px;width:62px;height:26.5px;border-radius:6px;background:#b72525"></div>
<span style="position:absolute;left:66px;top:13.14px;font-size:12px;font-weight:400;color:#e8e8e8;font-family:'Liberation Sans',sans-serif;transform:scaleX(0.9143);transform-origin:0 0;">Запись</span>
<span style="position:absolute;left:757px;top:3.96px;font-size:12.2px;font-weight:700;color:#2e2a36;font-family:'Liberation Sans',sans-serif;transform:scaleX(0.9599);transform-origin:0 0;">Вы просматриваете экран Ирина Комар</span>
<span style="position:absolute;left:1024px;top:4.79px;font-size:11.5px;font-weight:700;color:#ffffff;font-family:'Liberation Sans',sans-serif;transform:scaleX(0.9659);transform-origin:0 0;">Настройки просмотра</span>
<span style="position:absolute;left:1825px;top:13.14px;font-size:12px;font-weight:400;color:#e6e6e6;font-family:'Liberation Sans',sans-serif;transform:scaleX(0.9206);transform-origin:0 0;">Вход</span>
<span style="position:absolute;left:1886.5px;top:13.14px;font-size:12px;font-weight:400;color:#e6e6e6;font-family:'Liberation Sans',sans-serif;transform:scaleX(0.9209);transform-origin:0 0;">Вид</span>
<span style="position:absolute;left:631.5px;top:131.43px;font-size:15px;font-weight:700;color:#fbefeb;font-family:'Liberation Sans',sans-serif;transform:scaleX(1.0962);transform-origin:0 0;">Киршина Н.Р._Парадоксы экзамена</span>
<span style="position:absolute;left:1173px;top:130.83px;font-size:14px;font-weight:700;color:#efb5a5;font-family:'Liberation Sans',sans-serif;transform:scaleX(1.0625);transform-origin:0 0;">Поиск (Cmd + Ctrl + U)</span>
<span style="position:absolute;left:19.5px;top:166.93px;font-size:15px;font-weight:700;color:#2b2b2b;font-family:'Liberation Sans',sans-serif;transform:scaleX(1.0243);transform-origin:0 0;">Главная</span>
<span style="position:absolute;left:110.8px;top:166.93px;font-size:15px;font-weight:700;color:#2b2b2b;font-family:'Liberation Sans',sans-serif;transform:scaleX(1.0010);transform-origin:0 0;">Вставка</span>
<span style="position:absolute;left:200px;top:166.93px;font-size:15px;font-weight:700;color:#2b2b2b;font-family:'Liberation Sans',sans-serif;transform:scaleX(1.0281);transform-origin:0 0;">Рисование</span>
<span style="position:absolute;left:315px;top:166.93px;font-size:15px;font-weight:700;color:#2b2b2b;font-family:'Liberation Sans',sans-serif;transform:scaleX(1.0358);transform-origin:0 0;">Конструктор</span>
<span style="position:absolute;left:442.6px;top:166.93px;font-size:15px;font-weight:700;color:#2b2b2b;font-family:'Liberation Sans',sans-serif;transform:scaleX(1.0066);transform-origin:0 0;">Переходы</span>
<span style="position:absolute;left:550.5px;top:166.93px;font-size:15px;font-weight:700;color:#2b2b2b;font-family:'Liberation Sans',sans-serif;transform:scaleX(1.0124);transform-origin:0 0;">Анимация</span>
<span style="position:absolute;left:658.3px;top:166.93px;font-size:15px;font-weight:700;color:#2b2b2b;font-family:'Liberation Sans',sans-serif;transform:scaleX(1.0296);transform-origin:0 0;">Слайд-шоу</span>
<span style="position:absolute;left:775px;top:166.93px;font-size:15px;font-weight:700;color:#2b2b2b;font-family:'Liberation Sans',sans-serif;transform:scaleX(1.0381);transform-origin:0 0;">Рецензирование</span>
<span style="position:absolute;left:935.5px;top:166.93px;font-size:15px;font-weight:700;color:#2b2b2b;font-family:'Liberation Sans',sans-serif;transform:scaleX(0.9399);transform-origin:0 0;">Вид</span>
<span style="position:absolute;left:993px;top:166.93px;font-size:15px;font-weight:700;color:#2b2b2b;font-family:'Liberation Sans',sans-serif;transform:scaleX(0.9889);transform-origin:0 0;">Запись</span>
<span style="position:absolute;left:1076px;top:166.93px;font-size:15px;font-weight:700;color:#2b2b2b;font-family:'Liberation Sans',sans-serif;transform:scaleX(1.0055);transform-origin:0 0;">Acrobat</span>
<span style="position:absolute;left:1415.5px;top:169.38px;font-size:14.5px;font-weight:700;color:#cc3f3a;font-family:'Liberation Sans',sans-serif;transform:scaleX(0.9996);transform-origin:0 0;">Поделиться</span>
<span style="position:absolute;left:20.5px;top:245.19px;font-size:12.5px;font-weight:700;color:#3b3b3b;font-family:'Liberation Sans',sans-serif;transform:scaleX(0.9496);transform-origin:0 0;">Вставить</span>
<span style="position:absolute;left:148.7px;top:245.19px;font-size:12.5px;font-weight:700;color:#3b3b3b;font-family:'Liberation Sans',sans-serif;transform:scaleX(0.9726);transform-origin:0 0;">Создать</span>
<span style="position:absolute;left:155.5px;top:259.19px;font-size:12.5px;font-weight:700;color:#3b3b3b;font-family:'Liberation Sans',sans-serif;transform:scaleX(0.9875);transform-origin:0 0;">слайд</span>
<span style="position:absolute;left:548.5px;top:210.62px;font-size:17px;font-weight:400;color:#b4b4b4;font-family:'Liberation Sans',sans-serif;transform:scaleX(1.2342);transform-origin:0 0;">A</span>
<span style="position:absolute;left:582px;top:213.33px;font-size:14px;font-weight:400;color:#b4b4b4;font-family:'Liberation Sans',sans-serif;transform:scaleX(1.1773);transform-origin:0 0;">A</span>
<span style="position:absolute;left:627.5px;top:210.62px;font-size:17px;font-weight:400;color:#b4b4b4;font-family:'Liberation Sans',sans-serif;transform:scaleX(1.1460);transform-origin:0 0;">A</span>
<span style="position:absolute;left:276.7px;top:247.43px;font-size:15px;font-weight:700;color:#a8a8a8;font-family:'Liberation Sans',sans-serif;transform:scaleX(1.2018);transform-origin:0 0;">Ж</span>
<span style="position:absolute;left:310px;top:247.43px;font-size:15px;font-weight:400;color:#b4b4b4;font-family:'Liberation Sans',sans-serif;transform:scaleX(1.1429);transform-origin:0 0;font-style:italic">К</span>
<span style="position:absolute;left:340px;top:247.33px;font-size:14px;font-weight:400;color:#b4b4b4;font-family:'Liberation Sans',sans-serif;transform:scaleX(1.2522);transform-origin:0 0;">Ч</span>
<span style="position:absolute;left:368px;top:248.33px;font-size:14px;font-weight:400;color:#b4b4b4;font-family:'Liberation Sans',sans-serif;transform:scaleX(1.1555);transform-origin:0 0;">ab</span>
<span style="position:absolute;left:404px;top:247.43px;font-size:15px;font-weight:400;color:#b4b4b4;font-family:'Liberation Sans',sans-serif;transform:scaleX(1.2000);transform-origin:0 0;">x</span>
<span style="position:absolute;left:414px;top:243.66px;font-size:7px;font-weight:400;color:#b4b4b4;font-family:'Liberation Sans',sans-serif;">2</span>
<span style="position:absolute;left:435.5px;top:247.43px;font-size:15px;font-weight:400;color:#b4b4b4;font-family:'Liberation Sans',sans-serif;transform:scaleX(1.2000);transform-origin:0 0;">x</span>
<span style="position:absolute;left:445px;top:258.67px;font-size:7px;font-weight:400;color:#b4b4b4;font-family:'Liberation Sans',sans-serif;">2</span>
<span style="position:absolute;left:460px;top:247.24px;font-size:13px;font-weight:400;color:#b4b4b4;font-family:'Liberation Sans',sans-serif;transform:scaleX(1.1409);transform-origin:0 0;">AV</span>
<span style="position:absolute;left:506px;top:247.43px;font-size:15px;font-weight:400;color:#b4b4b4;font-family:'Liberation Sans',sans-serif;transform:scaleX(1.0131);transform-origin:0 0;">Aa</span>
<span style="position:absolute;left:617px;top:247.43px;font-size:15px;font-weight:400;color:#b4b4b4;font-family:'Liberation Sans',sans-serif;transform:scaleX(1.0983);transform-origin:0 0;">A</span>
<span style="position:absolute;left:726px;top:209.97px;font-size:5px;font-weight:400;color:#a9cde8;font-family:'Liberation Sans',sans-serif;">1</span>
<span style="position:absolute;left:726px;top:216.78px;font-size:5px;font-weight:400;color:#a9cde8;font-family:'Liberation Sans',sans-serif;">2</span>
<span style="position:absolute;left:726px;top:223.57px;font-size:5px;font-weight:400;color:#a9cde8;font-family:'Liberation Sans',sans-serif;">3</span>
<span style="position:absolute;left:972.5px;top:245.19px;font-size:12.5px;font-weight:700;color:#a6a6a6;font-family:'Liberation Sans',sans-serif;transform:scaleX(1.0054);transform-origin:0 0;">Преобразовать</span>
<span style="position:absolute;left:989.5px;top:259.19px;font-size:12.5px;font-weight:700;color:#a6a6a6;font-family:'Liberation Sans',sans-serif;transform:scaleX(0.9744);transform-origin:0 0;">в SmartArt</span>
<span style="position:absolute;left:1098.5px;top:245.19px;font-size:12.5px;font-weight:700;color:#3b3b3b;font-family:'Liberation Sans',sans-serif;transform:scaleX(1.0024);transform-origin:0 0;">Рисунок</span>
<span style="position:absolute;left:1225px;top:245.19px;font-size:12.5px;font-weight:700;color:#3b3b3b;font-family:'Liberation Sans',sans-serif;transform:scaleX(0.9884);transform-origin:0 0;">Рисование</span>
<span style="position:absolute;left:1329.5px;top:245.19px;font-size:12.5px;font-weight:700;color:#3b3b3b;font-family:'Liberation Sans',sans-serif;transform:scaleX(1.0016);transform-origin:0 0;">Create PDF</span>
<span style="position:absolute;left:1322.5px;top:259.19px;font-size:12.5px;font-weight:700;color:#3b3b3b;font-family:'Liberation Sans',sans-serif;transform:scaleX(0.9695);transform-origin:0 0;">and share link</span>
<span style="position:absolute;left:18.8px;top:285.43px;font-size:15px;font-weight:400;color:#3a3a3a;font-family:'Liberation Sans',sans-serif;">7</span>
<span style="position:absolute;left:18.8px;top:366.93px;font-size:15px;font-weight:400;color:#3a3a3a;font-family:'Liberation Sans',sans-serif;">8</span>
<span style="position:absolute;left:18.8px;top:448.93px;font-size:15px;font-weight:400;color:#3a3a3a;font-family:'Liberation Sans',sans-serif;">9</span>
<span style="position:absolute;left:14px;top:530.42px;font-size:15px;font-weight:400;color:#3a3a3a;font-family:'Liberation Sans',sans-serif;">10</span>
<span style="position:absolute;left:14px;top:612.42px;font-size:15px;font-weight:400;color:#3a3a3a;font-family:'Liberation Sans',sans-serif;">11</span>
<span style="position:absolute;left:14px;top:693.92px;font-size:15px;font-weight:400;color:#3a3a3a;font-family:'Liberation Sans',sans-serif;">12</span>
<span style="position:absolute;left:14px;top:775.42px;font-size:15px;font-weight:400;color:#3a3a3a;font-family:'Liberation Sans',sans-serif;">13</span>
<span style="position:absolute;left:14px;top:856.92px;font-size:15px;font-weight:400;color:#3a3a3a;font-family:'Liberation Sans',sans-serif;">14</span>
<span style="position:absolute;left:441px;top:350.47px;font-size:35.5px;font-weight:400;color:#c8101e;font-family:'Liberation Sans',sans-serif;transform:scaleX(0.9881);transform-origin:0 0;-webkit-text-stroke:0.6px #c8101e">Стандарт отменен, но вопросы на экзамене есть</span>
<span style="position:absolute;left:801.8px;top:497.43px;font-size:14px;font-weight:700;color:#4a4878;font-family:'Liberation Sans',sans-serif;transform:scaleX(1.0982);transform-origin:0 0;">Какие методы определения инвестиционной стоимости</span>
<span style="position:absolute;left:801.8px;top:517.23px;font-size:14px;font-weight:700;color:#4a4878;font-family:'Liberation Sans',sans-serif;transform:scaleX(1.1075);transform-origin:0 0;">применяются в соответствии с ФСО №13:</span>
<span style="position:absolute;left:801.8px;top:537.03px;font-size:14px;font-weight:700;color:#4a4878;font-family:'Liberation Sans',sans-serif;transform:scaleX(1.0935);transform-origin:0 0;">I. метод дисконтированных денежных потоков</span>
<span style="position:absolute;left:801.8px;top:556.83px;font-size:14px;font-weight:700;color:#4a4878;font-family:'Liberation Sans',sans-serif;transform:scaleX(1.1162);transform-origin:0 0;">II. метод остатка</span>
<span style="position:absolute;left:801.8px;top:576.63px;font-size:14px;font-weight:700;color:#4a4878;font-family:'Liberation Sans',sans-serif;transform:scaleX(1.1162);transform-origin:0 0;">III. метод сравнения продаж</span>
<span style="position:absolute;left:801.8px;top:596.43px;font-size:14px;font-weight:700;color:#4a4878;font-family:'Liberation Sans',sans-serif;transform:scaleX(1.1255);transform-origin:0 0;">IV. метод распределения</span>
<span style="position:absolute;left:801.8px;top:616.23px;font-size:14px;font-weight:700;color:#4a4878;font-family:'Liberation Sans',sans-serif;transform:scaleX(1.1034);transform-origin:0 0;">V. метод суммирования стоимости компонентов</span>
<span style="position:absolute;left:472.4px;top:781.10px;font-size:21px;font-weight:400;color:#f0162c;font-family:'Liberation Sans',sans-serif;transform:scaleX(1.0774);transform-origin:0 0;-webkit-text-stroke:0.4px #f0162c">ФСО №13 не действует, но авторов вопросов это не волнует</span>
<span style="position:absolute;left:186px;top:903.42px;font-size:15px;font-weight:700;color:#2a2a2a;font-family:'Liberation Sans',sans-serif;transform:scaleX(0.9552);transform-origin:0 0;">Щелкните, чтобы добавить заметки</span>
<span style="position:absolute;left:34.4px;top:937.68px;font-size:14.5px;font-weight:400;color:#7c7c7c;font-family:'Liberation Sans',sans-serif;transform:scaleX(0.9956);transform-origin:0 0;">Слайд 10 из 14</span>
<span style="position:absolute;left:161.5px;top:937.68px;font-size:14.5px;font-weight:400;color:#7c7c7c;font-family:'Liberation Sans',sans-serif;transform:scaleX(1.0952);transform-origin:0 0;">русский</span>
<span style="position:absolute;left:263.3px;top:937.68px;font-size:14.5px;font-weight:400;color:#7c7c7c;font-family:'Liberation Sans',sans-serif;transform:scaleX(1.0470);transform-origin:0 0;">Специальные возможности: проверьте рекомендации</span>
<span style="position:absolute;left:858.8px;top:937.68px;font-size:14.5px;font-weight:400;color:#7c7c7c;font-family:'Liberation Sans',sans-serif;transform:scaleX(1.0456);transform-origin:0 0;">Заметки</span>
<span style="position:absolute;left:962.4px;top:937.68px;font-size:14.5px;font-weight:400;color:#7c7c7c;font-family:'Liberation Sans',sans-serif;transform:scaleX(1.0272);transform-origin:0 0;">Примечания</span>
<span style="position:absolute;left:1415.4px;top:937.68px;font-size:14.5px;font-weight:400;color:#7c7c7c;font-family:'Liberation Sans',sans-serif;transform:scaleX(0.9389);transform-origin:0 0;">117 %</span>
<span style="position:absolute;left:1555.5px;top:630.19px;font-size:12.5px;font-weight:400;color:#ffffff;font-family:'Liberation Sans',sans-serif;transform:scaleX(1.0328);transform-origin:0 0;">Наталья Киршина</span>
<span style="position:absolute;left:10px;top:1059.69px;font-size:12.5px;font-weight:400;color:#e0e0e0;font-family:'Liberation Sans',sans-serif;transform:scaleX(0.9955);transform-origin:0 0;">Включить звук</span>
<span style="position:absolute;left:112.5px;top:1059.69px;font-size:12.5px;font-weight:400;color:#e0e0e0;font-family:'Liberation Sans',sans-serif;transform:scaleX(0.9504);transform-origin:0 0;">Начать видео</span>
<span style="position:absolute;left:530px;top:1035.14px;font-size:12px;font-weight:400;color:#d6d6d6;font-family:'Liberation Sans',sans-serif;transform:scaleX(0.9731);transform-origin:0 0;">47</span>
<span style="position:absolute;left:485px;top:1059.69px;font-size:12.5px;font-weight:400;color:#e0e0e0;font-family:'Liberation Sans',sans-serif;transform:scaleX(0.9712);transform-origin:0 0;">Участники</span>
<span style="position:absolute;left:632px;top:1031.05px;font-size:11px;font-weight:700;color:#ffffff;font-family:'Liberation Sans',sans-serif;transform:scaleX(1.0612);transform-origin:0 0;">4</span>
<span style="position:absolute;left:614px;top:1059.69px;font-size:12.5px;font-weight:400;color:#e0e0e0;font-family:'Liberation Sans',sans-serif;transform:scaleX(0.9164);transform-origin:0 0;">Чат</span>
<span style="position:absolute;left:677px;top:1059.69px;font-size:12.5px;font-weight:400;color:#29d35a;font-family:'Liberation Sans',sans-serif;transform:scaleX(0.9629);transform-origin:0 0;">Демонстрация экрана</span>
<span style="position:absolute;left:828px;top:1059.69px;font-size:12.5px;font-weight:400;color:#e0e0e0;font-family:'Liberation Sans',sans-serif;transform:scaleX(0.9478);transform-origin:0 0;">Сводка</span>
<span style="position:absolute;left:896px;top:1059.69px;font-size:12.5px;font-weight:400;color:#e0e0e0;font-family:'Liberation Sans',sans-serif;transform:scaleX(0.9657);transform-origin:0 0;">AI Companion</span>
<span style="position:absolute;left:1000.6px;top:1059.69px;font-size:12.5px;font-weight:400;color:#e0e0e0;font-family:'Liberation Sans',sans-serif;transform:scaleX(0.9533);transform-origin:0 0;">Запись</span>
<span style="position:absolute;left:1114.5px;top:1039.00px;font-size:10.5px;font-weight:700;color:#1b1b1b;font-family:'Liberation Sans',sans-serif;transform:scaleX(0.9887);transform-origin:0 0;">CC</span>
<span style="position:absolute;left:1069.5px;top:1059.69px;font-size:12.5px;font-weight:400;color:#e0e0e0;font-family:'Liberation Sans',sans-serif;transform:scaleX(0.9523);transform-origin:0 0;">Показать субтитры</span>
<span style="position:absolute;left:1200px;top:1059.69px;font-size:12.5px;font-weight:400;color:#e0e0e0;font-family:'Liberation Sans',sans-serif;transform:scaleX(0.9524);transform-origin:0 0;">Реакции</span>
<span style="position:absolute;left:1271px;top:1059.69px;font-size:12.5px;font-weight:400;color:#e0e0e0;font-family:'Liberation Sans',sans-serif;transform:scaleX(0.9940);transform-origin:0 0;">Приложения</span>
<span style="position:absolute;left:1359.7px;top:1059.69px;font-size:12.5px;font-weight:400;color:#e0e0e0;font-family:'Liberation Sans',sans-serif;transform:scaleX(0.9898);transform-origin:0 0;">Доски сообщений</span>
<span style="position:absolute;left:1483px;top:1059.69px;font-size:12.5px;font-weight:400;color:#e0e0e0;font-family:'Liberation Sans',sans-serif;transform:scaleX(0.9810);transform-origin:0 0;">Примечания</span>
<span style="position:absolute;left:1857.5px;top:1046.19px;font-size:12.5px;font-weight:700;color:#ffffff;font-family:'Liberation Sans',sans-serif;transform:scaleX(0.9101);transform-origin:0 0;">Выйти</span></div></body></html>
